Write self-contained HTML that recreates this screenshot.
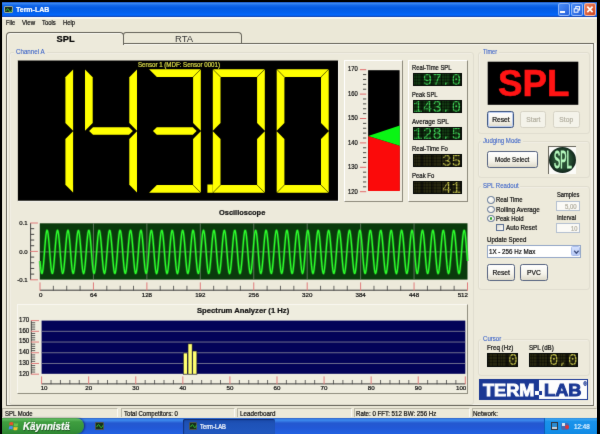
<!DOCTYPE html>
<html lang="fi"><head><meta charset="utf-8"><title>Term-LAB</title>
<style>
html,body{margin:0;padding:0;}
body{width:600px;height:434px;background:#000;overflow:hidden;position:relative;font-family:"Liberation Sans",sans-serif;}
#s{position:absolute;left:0;top:0;width:600px;height:442px;overflow:hidden;will-change:transform;filter:url(#soft);}
#s div{position:absolute;box-sizing:border-box;}
#s svg{position:absolute;overflow:visible;}
.t{position:absolute;white-space:nowrap;transform-origin:0 50%;display:block;}

.t{-webkit-text-stroke:0.22px currentColor;}
.btn{border:0.9px solid #566380;border-radius:2.5px;background:linear-gradient(#ffffff,#f5f3ea 60%,#dedaca);}
.btn.dis{border-color:#d6d3c5;background:#f4f3ea;}
.btn.def{border-color:#3c5480;box-shadow:inset 0 0 0 1px #bccdf0;}
.grp{border:1px solid #e0ddcf;border-radius:3px;box-shadow:inset 0.6px 0.6px 0 rgba(255,255,255,.45);}
.pan{background:#efecdf;border:1px solid;border-color:#ffffff #8d8a7c #8d8a7c #ffffff;}
.seg{background:#ffff00;}
.lcdtxt{position:absolute;color:transparent;font-family:'Liberation Mono',monospace;font-size:100px;letter-spacing:4.5px;overflow:hidden;white-space:nowrap;}

</style></head><body><svg width="0" height="0" style="position:absolute"><filter id="soft" x="0" y="0" width="100%" height="100%" color-interpolation-filters="sRGB"><feConvolveMatrix order="3" kernelMatrix="0.0052 0.0619 0.0052 0.0619 0.7316 0.0619 0.0052 0.0619 0.0052" divisor="1" edgeMode="duplicate" preserveAlpha="true"/></filter></svg><div id="s">
<div style="left:1.80px;top:2.00px;width:595.20px;height:416.00px;background:#ebe8d7;"></div>
<div style="left:1.80px;top:1.60px;width:595.20px;height:15.80px;background:linear-gradient(#1a50c0 0,#3a88f2 9%,#1468ea 22%,#045ae2 40%,#0360ee 70%,#0468fc 88%,#0c4cc8 95%,#163c9c 100%);"></div>
<div style="left:1.80px;top:17.40px;width:595.20px;height:1.30px;background:linear-gradient(#ffffff,#f4f2e6);"></div>
<div style="left:4.00px;top:5.80px;width:8.60px;height:7.40px;background:#1c2a1c;border:0.6px solid #9aa89a;border-radius:1px;"><svg width="8" height="7" viewBox="0 0 8 7" style="left:0;top:0"><path d="M0.8 4.2 C2 1.2 3 1.2 4 3.4 S6 5.6 7 2.6" fill="none" stroke="#35e035" stroke-width="0.9"/></svg></div>
<span class="t" style="left:16.20px;top:5.22px;height:9.36px;line-height:9.36px;font-size:7.80px;color:#fff;font-family:'Liberation Sans',sans-serif;font-weight:bold;transform:scaleX(0.8970);">Term-LAB</span>
<div style="left:557.80px;top:2.90px;width:11.80px;height:12.70px;border-radius:2.2px;border:0.8px solid rgba(190,215,255,.7);background:linear-gradient(135deg,#4a8cf6,#2460dc);"></div>
<div style="left:571.00px;top:2.90px;width:11.80px;height:12.70px;border-radius:2.2px;border:0.8px solid rgba(190,215,255,.7);background:linear-gradient(135deg,#4a8cf6,#2460dc);"></div>
<div style="left:584.10px;top:2.90px;width:11.80px;height:12.70px;border-radius:2.2px;border:0.8px solid rgba(255,215,200,.75);background:linear-gradient(135deg,#ee8460,#cc4420);"></div>
<div style="left:560.30px;top:11.40px;width:4.40px;height:1.60px;background:#fff;"></div>
<svg width="12" height="13" viewBox="0 0 12 13" style="left:571px;top:2.9px"><rect x="4.8" y="3.6" width="3.8" height="3.4" fill="none" stroke="#fff" stroke-width="1"/><rect x="3.2" y="5.8" width="3.8" height="3.4" fill="#2c6ae2" stroke="#fff" stroke-width="1"/></svg>
<svg width="12" height="13" viewBox="0 0 12 13" style="left:584.1px;top:2.9px"><path d="M3.3 3.6 L8.6 9.2 M8.6 3.6 L3.3 9.2" stroke="#fff" stroke-width="1.7" fill="none"/></svg>
<span class="t" style="left:6.00px;top:18.62px;height:8.16px;line-height:8.16px;font-size:6.80px;color:#111;font-family:'Liberation Sans',sans-serif;transform:scaleX(0.8214);">File</span>
<span class="t" style="left:22.00px;top:18.62px;height:8.16px;line-height:8.16px;font-size:6.80px;color:#111;font-family:'Liberation Sans',sans-serif;transform:scaleX(0.8895);">View</span>
<span class="t" style="left:42.00px;top:18.62px;height:8.16px;line-height:8.16px;font-size:6.80px;color:#111;font-family:'Liberation Sans',sans-serif;transform:scaleX(0.8631);">Tools</span>
<span class="t" style="left:63.00px;top:18.62px;height:8.16px;line-height:8.16px;font-size:6.80px;color:#111;font-family:'Liberation Sans',sans-serif;transform:scaleX(0.8581);">Help</span>
<div style="left:123.20px;top:31.90px;width:118.80px;height:12.00px;background:#ebe8d7;border:1px solid #66645a;border-bottom:none;border-radius:3px 4px 0 0;"></div>
<div style="left:6.20px;top:42.70px;width:587.90px;height:363.10px;background:#edeadb;border:1px solid #66645a;border-right:1.9px solid #7d7b6c;box-shadow:inset 1px 1px 0 #fbfaf3,inset -1.5px -1px 0 #f7f6ee;"></div>
<div style="left:594.20px;top:43.00px;width:1.60px;height:363.00px;background:#f8f7f0;"></div>
<div style="left:6.20px;top:31.90px;width:118.00px;height:13.20px;background:#edeadb;border:1px solid #66645a;border-bottom:none;border-radius:4px 4px 0 0;box-shadow:inset 1px 1px 0 #fbfaf3;"></div>
<span class="t" style="left:56.56px;top:33.72px;height:11.16px;line-height:11.16px;font-size:9.30px;color:#000;font-family:'Liberation Sans',sans-serif;font-weight:bold;">SPL</span>
<span class="t" style="left:175.00px;top:33.50px;height:10.80px;line-height:10.80px;font-size:9.00px;color:#333;font-family:'Liberation Sans',sans-serif;transform:scaleX(1.0484);-webkit-text-stroke:0;">RTA</span>
<div class="grp" style="left:9.30px;top:51.50px;width:464.80px;height:353.20px;"></div>
<div style="left:13.50px;top:48.00px;width:33.50px;height:7.00px;background:#edeadb;"></div>
<span class="t" style="left:15.70px;top:48.32px;height:8.16px;line-height:8.16px;font-size:6.80px;color:#3a62c8;font-family:'Liberation Sans',sans-serif;transform:scaleX(0.9114);-webkit-text-stroke:0.1px;">Channel A</span>
<div style="left:17.00px;top:60.00px;width:322.00px;height:142.00px;border:1px solid;border-color:#cfccbe #f8f7f0 #f8f7f0 #cfccbe;"></div>
<svg width="600" height="442" style="left:0;top:0"><rect x="18.00" y="60.60" width="320.00" height="140.10" fill="#000"/></svg>
<span class="t" style="left:138.00px;top:61.44px;height:7.92px;line-height:7.92px;font-size:6.60px;color:#dcdc4a;font-family:'Liberation Sans',sans-serif;transform:scaleX(0.9315);">Sensor 1 (MDF: Sensor 0001)</span>
<div class="lcd" role="img" aria-label="143.00" style="left:0;top:0;width:600px;height:434px;pointer-events:none"><span class="lcdtxt" style="left:20.5px;top:69.3px;width:310px;height:123.4px;line-height:123.4px">14300</span><div class="dg d1" style="left:0;top:0;width:600px;height:434px"><div class="seg" style="left:64px;top:68px;width:11px;height:64px;clip-path:polygon(9.10px 1.60px,9.10px 62.70px,1.40px 55.00px,1.40px 9.30px)"></div><div class="seg" style="left:64px;top:130px;width:11px;height:64px;clip-path:polygon(9.10px 1.30px,9.10px 62.40px,1.40px 54.70px,1.40px 9.00px)"></div></div><div class="dg d4" style="left:0;top:0;width:600px;height:434px"><div class="seg" style="left:84px;top:68px;width:10px;height:64px;clip-path:polygon(1.00px 1.60px,1.00px 62.70px,8.70px 55.00px,8.70px 9.30px)"></div><div class="seg" style="left:88px;top:126px;width:46px;height:10px;clip-path:polygon(1.15px 5.00px,5.00px 1.15px,41.00px 1.15px,44.85px 5.00px,41.00px 8.85px,5.00px 8.85px)"></div><div class="seg" style="left:128px;top:68px;width:10px;height:64px;clip-path:polygon(9.00px 1.60px,9.00px 62.70px,1.30px 55.00px,1.30px 9.30px)"></div><div class="seg" style="left:128px;top:130px;width:10px;height:64px;clip-path:polygon(9.00px 1.30px,9.00px 62.40px,1.30px 54.70px,1.30px 9.00px)"></div></div><div class="dg d3" style="left:0;top:0;width:600px;height:434px"><div class="seg" style="left:148px;top:68px;width:54px;height:10px;clip-path:polygon(1.10px 1.30px,52.50px 1.30px,44.80px 9.00px,8.80px 9.00px)"></div><div class="seg" style="left:192px;top:68px;width:10px;height:64px;clip-path:polygon(8.80px 1.60px,8.80px 62.70px,1.10px 55.00px,1.10px 9.30px)"></div><div class="seg" style="left:151px;top:126px;width:47px;height:10px;clip-path:polygon(1.95px 5.00px,5.80px 1.15px,41.80px 1.15px,45.65px 5.00px,41.80px 8.85px,5.80px 8.85px)"></div><div class="seg" style="left:192px;top:130px;width:10px;height:64px;clip-path:polygon(8.80px 1.30px,8.80px 62.40px,1.10px 54.70px,1.10px 9.00px)"></div><div class="seg" style="left:148px;top:184px;width:54px;height:10px;clip-path:polygon(1.10px 8.70px,52.50px 8.70px,44.80px 1.00px,8.80px 1.00px)"></div></div><div class="dg d0" style="left:0;top:0;width:600px;height:434px"><div class="seg" style="left:212px;top:68px;width:54px;height:10px;clip-path:polygon(1.10px 1.30px,52.50px 1.30px,44.80px 9.00px,8.80px 9.00px)"></div><div class="seg" style="left:256px;top:68px;width:10px;height:64px;clip-path:polygon(8.80px 1.60px,8.80px 62.70px,1.10px 55.00px,1.10px 9.30px)"></div><div class="seg" style="left:256px;top:130px;width:10px;height:64px;clip-path:polygon(8.80px 1.30px,8.80px 62.40px,1.10px 54.70px,1.10px 9.00px)"></div><div class="seg" style="left:212px;top:184px;width:54px;height:10px;clip-path:polygon(1.10px 8.70px,52.50px 8.70px,44.80px 1.00px,8.80px 1.00px)"></div><div class="seg" style="left:211px;top:130px;width:11px;height:64px;clip-path:polygon(1.80px 1.30px,1.80px 62.40px,9.50px 54.70px,9.50px 9.00px)"></div><div class="seg" style="left:211px;top:68px;width:11px;height:64px;clip-path:polygon(1.80px 1.60px,1.80px 62.70px,9.50px 55.00px,9.50px 9.30px)"></div></div><div class="dg d0" style="left:0;top:0;width:600px;height:434px"><div class="seg" style="left:276px;top:68px;width:54px;height:10px;clip-path:polygon(1.00px 1.30px,52.40px 1.30px,44.70px 9.00px,8.70px 9.00px)"></div><div class="seg" style="left:320px;top:68px;width:10px;height:64px;clip-path:polygon(8.70px 1.60px,8.70px 62.70px,1.00px 55.00px,1.00px 9.30px)"></div><div class="seg" style="left:320px;top:130px;width:10px;height:64px;clip-path:polygon(8.70px 1.30px,8.70px 62.40px,1.00px 54.70px,1.00px 9.00px)"></div><div class="seg" style="left:276px;top:184px;width:54px;height:10px;clip-path:polygon(1.00px 8.70px,52.40px 8.70px,44.70px 1.00px,8.70px 1.00px)"></div><div class="seg" style="left:275px;top:130px;width:11px;height:64px;clip-path:polygon(1.70px 1.30px,1.70px 62.40px,9.40px 54.70px,9.40px 9.00px)"></div><div class="seg" style="left:275px;top:68px;width:11px;height:64px;clip-path:polygon(1.70px 1.60px,1.70px 62.70px,9.40px 55.00px,9.40px 9.30px)"></div></div><div class="dg dp" style="left:0;top:0;width:600px;height:434px"><div class="seg" style="left:206px;top:183px;width:8px;height:11px;clip-path:polygon(1.40px 1.60px,6.80px 1.60px,6.80px 9.70px,1.40px 9.70px)"></div></div></div>
<div class="pan" style="left:344.30px;top:59.80px;width:58.80px;height:142.40px;"></div>
<svg width="600" height="442" style="left:0;top:0"><rect x="368.10" y="70.20" width="31.50" height="120.30" fill="#000"/></svg>
<svg width="32" height="121" viewBox="0 0 31.4 120.3" style="left:368.2px;top:70.2px"><polygon points="0,65.5 31.4,75.4 31.4,120.3 0,120.3" fill="#fb0a0a"/><polygon points="0,65.5 31.4,55.2 31.4,75.4" fill="#0af514"/></svg>
<svg width="600" height="434" style="left:0;top:0"><line x1="359.9" x2="366.2" y1="69.70" y2="69.70" stroke="#e06a6a" stroke-width="1"/><line x1="363" x2="366.2" y1="74.58" y2="74.58" stroke="#3a3a34" stroke-width="0.9"/><line x1="363" x2="366.2" y1="79.46" y2="79.46" stroke="#3a3a34" stroke-width="0.9"/><line x1="363" x2="366.2" y1="84.34" y2="84.34" stroke="#3a3a34" stroke-width="0.9"/><line x1="363" x2="366.2" y1="89.22" y2="89.22" stroke="#3a3a34" stroke-width="0.9"/><line x1="359.9" x2="366.2" y1="94.10" y2="94.10" stroke="#e06a6a" stroke-width="1"/><line x1="363" x2="366.2" y1="98.98" y2="98.98" stroke="#3a3a34" stroke-width="0.9"/><line x1="363" x2="366.2" y1="103.86" y2="103.86" stroke="#3a3a34" stroke-width="0.9"/><line x1="363" x2="366.2" y1="108.74" y2="108.74" stroke="#3a3a34" stroke-width="0.9"/><line x1="363" x2="366.2" y1="113.62" y2="113.62" stroke="#3a3a34" stroke-width="0.9"/><line x1="359.9" x2="366.2" y1="118.50" y2="118.50" stroke="#e06a6a" stroke-width="1"/><line x1="363" x2="366.2" y1="123.38" y2="123.38" stroke="#3a3a34" stroke-width="0.9"/><line x1="363" x2="366.2" y1="128.26" y2="128.26" stroke="#3a3a34" stroke-width="0.9"/><line x1="363" x2="366.2" y1="133.14" y2="133.14" stroke="#3a3a34" stroke-width="0.9"/><line x1="363" x2="366.2" y1="138.02" y2="138.02" stroke="#3a3a34" stroke-width="0.9"/><line x1="359.9" x2="366.2" y1="142.90" y2="142.90" stroke="#e06a6a" stroke-width="1"/><line x1="363" x2="366.2" y1="147.78" y2="147.78" stroke="#3a3a34" stroke-width="0.9"/><line x1="363" x2="366.2" y1="152.66" y2="152.66" stroke="#3a3a34" stroke-width="0.9"/><line x1="363" x2="366.2" y1="157.54" y2="157.54" stroke="#3a3a34" stroke-width="0.9"/><line x1="363" x2="366.2" y1="162.42" y2="162.42" stroke="#3a3a34" stroke-width="0.9"/><line x1="359.9" x2="366.2" y1="167.30" y2="167.30" stroke="#e06a6a" stroke-width="1"/><line x1="363" x2="366.2" y1="172.18" y2="172.18" stroke="#3a3a34" stroke-width="0.9"/><line x1="363" x2="366.2" y1="177.06" y2="177.06" stroke="#3a3a34" stroke-width="0.9"/><line x1="363" x2="366.2" y1="181.94" y2="181.94" stroke="#3a3a34" stroke-width="0.9"/><line x1="363" x2="366.2" y1="186.82" y2="186.82" stroke="#3a3a34" stroke-width="0.9"/><line x1="359.9" x2="366.2" y1="191.70" y2="191.70" stroke="#e06a6a" stroke-width="1"/></svg>
<span class="t" style="left:348.30px;top:64.98px;height:8.04px;line-height:8.04px;font-size:6.70px;color:#111;font-family:'Liberation Sans',sans-serif;transform:scaleX(0.8768);">170</span>
<span class="t" style="left:348.30px;top:89.53px;height:8.04px;line-height:8.04px;font-size:6.70px;color:#111;font-family:'Liberation Sans',sans-serif;transform:scaleX(0.8768);">160</span>
<span class="t" style="left:348.30px;top:114.08px;height:8.04px;line-height:8.04px;font-size:6.70px;color:#111;font-family:'Liberation Sans',sans-serif;transform:scaleX(0.8768);">150</span>
<span class="t" style="left:348.30px;top:138.63px;height:8.04px;line-height:8.04px;font-size:6.70px;color:#111;font-family:'Liberation Sans',sans-serif;transform:scaleX(0.8768);">140</span>
<span class="t" style="left:348.30px;top:163.18px;height:8.04px;line-height:8.04px;font-size:6.70px;color:#111;font-family:'Liberation Sans',sans-serif;transform:scaleX(0.8768);">130</span>
<span class="t" style="left:348.30px;top:187.73px;height:8.04px;line-height:8.04px;font-size:6.70px;color:#111;font-family:'Liberation Sans',sans-serif;transform:scaleX(0.8768);">120</span>
<div class="pan" style="left:407.50px;top:59.80px;width:60.70px;height:142.40px;"></div>
<span class="t" style="left:412.00px;top:63.68px;height:8.04px;line-height:8.04px;font-size:6.70px;color:#111;font-family:'Liberation Sans',sans-serif;transform:scaleX(0.8766);">Real-Time SPL</span>
<div style="left:412.50px;top:72.60px;width:49.20px;height:13.30px;background:repeating-linear-gradient(to left,#081c08 0,#081c08 0.9px,#113811 1.1px,#113811 9.0px,#081c08 9.3px,#081c08 9.65px);border:0.8px solid #050805;overflow:hidden;"><span class="t" style="left:9.19px;top:-2.05px;height:19.20px;line-height:19.20px;font-size:16.00px;color:#3cc452;font-family:'Liberation Mono',monospace;-webkit-text-stroke:0;">97,0</span><div style="left:0;top:0;width:100%;height:100%;background:repeating-linear-gradient(0deg,rgba(0,0,0,.32) 0,rgba(0,0,0,.32) 0.45px,transparent 0.55px,transparent 1.55px),repeating-linear-gradient(270deg,rgba(0,0,0,.32) 0,rgba(0,0,0,.32) 0.45px,transparent 0.55px,transparent 1.61px);"></div></div>
<span class="t" style="left:412.00px;top:90.68px;height:8.04px;line-height:8.04px;font-size:6.70px;color:#111;font-family:'Liberation Sans',sans-serif;transform:scaleX(0.8525);">Peak SPL</span>
<div style="left:412.50px;top:99.67px;width:49.20px;height:13.30px;background:repeating-linear-gradient(to left,#081c08 0,#081c08 0.9px,#113811 1.1px,#113811 9.0px,#081c08 9.3px,#081c08 9.65px);border:0.8px solid #050805;overflow:hidden;"><span class="t" style="left:-0.41px;top:-2.05px;height:19.20px;line-height:19.20px;font-size:16.00px;color:#3cc452;font-family:'Liberation Mono',monospace;-webkit-text-stroke:0;">143,0</span><div style="left:0;top:0;width:100%;height:100%;background:repeating-linear-gradient(0deg,rgba(0,0,0,.32) 0,rgba(0,0,0,.32) 0.45px,transparent 0.55px,transparent 1.55px),repeating-linear-gradient(270deg,rgba(0,0,0,.32) 0,rgba(0,0,0,.32) 0.45px,transparent 0.55px,transparent 1.61px);"></div></div>
<span class="t" style="left:412.00px;top:117.68px;height:8.04px;line-height:8.04px;font-size:6.70px;color:#111;font-family:'Liberation Sans',sans-serif;transform:scaleX(0.9376);">Average SPL</span>
<div style="left:412.50px;top:126.74px;width:49.20px;height:13.30px;background:repeating-linear-gradient(to left,#081c08 0,#081c08 0.9px,#113811 1.1px,#113811 9.0px,#081c08 9.3px,#081c08 9.65px);border:0.8px solid #050805;overflow:hidden;"><span class="t" style="left:-0.41px;top:-2.05px;height:19.20px;line-height:19.20px;font-size:16.00px;color:#3cc452;font-family:'Liberation Mono',monospace;-webkit-text-stroke:0;">128,5</span><div style="left:0;top:0;width:100%;height:100%;background:repeating-linear-gradient(0deg,rgba(0,0,0,.32) 0,rgba(0,0,0,.32) 0.45px,transparent 0.55px,transparent 1.55px),repeating-linear-gradient(270deg,rgba(0,0,0,.32) 0,rgba(0,0,0,.32) 0.45px,transparent 0.55px,transparent 1.61px);"></div></div>
<span class="t" style="left:412.00px;top:144.68px;height:8.04px;line-height:8.04px;font-size:6.70px;color:#111;font-family:'Liberation Sans',sans-serif;transform:scaleX(0.8927);">Real-Time Fo</span>
<div style="left:412.50px;top:153.81px;width:49.20px;height:13.30px;background:repeating-linear-gradient(to left,#12120a 0,#12120a 0.9px,#26260f 1.1px,#26260f 9.0px,#12120a 9.3px,#12120a 9.65px);border:0.8px solid #050805;overflow:hidden;"><span class="t" style="left:28.40px;top:-2.05px;height:19.20px;line-height:19.20px;font-size:16.00px;color:#b9b848;font-family:'Liberation Mono',monospace;-webkit-text-stroke:0;">35</span><div style="left:0;top:0;width:100%;height:100%;background:repeating-linear-gradient(0deg,rgba(0,0,0,.32) 0,rgba(0,0,0,.32) 0.45px,transparent 0.55px,transparent 1.55px),repeating-linear-gradient(270deg,rgba(0,0,0,.32) 0,rgba(0,0,0,.32) 0.45px,transparent 0.55px,transparent 1.61px);"></div></div>
<span class="t" style="left:412.00px;top:171.68px;height:8.04px;line-height:8.04px;font-size:6.70px;color:#111;font-family:'Liberation Sans',sans-serif;transform:scaleX(0.8938);">Peak Fo</span>
<div style="left:412.50px;top:180.88px;width:49.20px;height:13.30px;background:repeating-linear-gradient(to left,#12120a 0,#12120a 0.9px,#26260f 1.1px,#26260f 9.0px,#12120a 9.3px,#12120a 9.65px);border:0.8px solid #050805;overflow:hidden;"><span class="t" style="left:28.40px;top:-2.05px;height:19.20px;line-height:19.20px;font-size:16.00px;color:#b9b848;font-family:'Liberation Mono',monospace;-webkit-text-stroke:0;">41</span><div style="left:0;top:0;width:100%;height:100%;background:repeating-linear-gradient(0deg,rgba(0,0,0,.32) 0,rgba(0,0,0,.32) 0.45px,transparent 0.55px,transparent 1.55px),repeating-linear-gradient(270deg,rgba(0,0,0,.32) 0,rgba(0,0,0,.32) 0.45px,transparent 0.55px,transparent 1.61px);"></div></div>
<div class="grp" style="left:478.00px;top:51.50px;width:112.30px;height:82.00px;"></div>
<div style="left:481.00px;top:48.50px;width:18.00px;height:7.00px;background:#edeadb;"></div>
<span class="t" style="left:483.00px;top:48.22px;height:8.16px;line-height:8.16px;font-size:6.80px;color:#3a62c8;font-family:'Liberation Sans',sans-serif;transform:scaleX(0.8177);-webkit-text-stroke:0.1px;">Timer</span>
<svg width="600" height="442" style="left:0;top:0"><rect x="487.70" y="61.70" width="90.60" height="43.10" fill="#000"/></svg>
<span class="t" style="left:497.90px;top:60.98px;height:44.64px;line-height:44.64px;font-size:37.20px;color:#ff1414;font-family:'Liberation Sans',sans-serif;font-weight:bold;transform:scaleX(0.9855);-webkit-text-stroke:0.7px #ff1414;">SPL</span>
<div class="btn def" style="left:487.30px;top:111.00px;width:27.20px;height:17.00px;"></div>
<span class="t" style="left:492.15px;top:115.98px;height:8.04px;line-height:8.04px;font-size:6.70px;color:#111;font-family:'Liberation Sans',sans-serif;">Reset</span>
<div class="btn dis" style="left:520.30px;top:111.00px;width:26.20px;height:17.00px;"></div>
<span class="t" style="left:526.33px;top:115.98px;height:8.04px;line-height:8.04px;font-size:6.70px;color:#b4b1a2;font-family:'Liberation Sans',sans-serif;">Start</span>
<div class="btn dis" style="left:553.00px;top:111.00px;width:26.50px;height:17.00px;"></div>
<span class="t" style="left:559.36px;top:115.98px;height:8.04px;line-height:8.04px;font-size:6.70px;color:#b4b1a2;font-family:'Liberation Sans',sans-serif;">Stop</span>
<div class="grp" style="left:478.00px;top:141.00px;width:112.30px;height:36.50px;"></div>
<div style="left:480.70px;top:138.00px;width:42.00px;height:7.00px;background:#edeadb;"></div>
<span class="t" style="left:482.70px;top:137.22px;height:8.16px;line-height:8.16px;font-size:6.80px;color:#3a62c8;font-family:'Liberation Sans',sans-serif;transform:scaleX(0.8896);-webkit-text-stroke:0.1px;">Judging Mode</span>
<div class="btn" style="left:487.30px;top:151.40px;width:51.20px;height:17.00px;"></div>
<span class="t" style="left:495.20px;top:156.38px;height:8.04px;line-height:8.04px;font-size:6.70px;color:#111;font-family:'Liberation Sans',sans-serif;transform:scaleX(0.9210);">Mode Select</span>
<div style="left:547.60px;top:146.00px;width:28.80px;height:28.20px;background:#fbfbf8;border-top:1px solid #6a685e;border-left:1px solid #6a685e;"></div>
<div style="left:548.80px;top:147.40px;width:27.20px;height:26.00px;background:radial-gradient(ellipse at 50% 48%,#2f5638 0,#244a30 45%,#10241a 70%,#1c1c24 88%,#4a4650 100%);border-radius:50%;"></div>
<span class="t" style="left:554.00px;top:146.78px;height:27.84px;line-height:27.84px;font-size:23.20px;color:#b8fcc0;font-family:'Liberation Sans',sans-serif;transform:scaleX(0.4059);-webkit-text-stroke:0.9px #b8fcc0;">SPL</span>
<div class="grp" style="left:478.00px;top:186.00px;width:112.30px;height:103.50px;"></div>
<div style="left:480.70px;top:183.00px;width:39.70px;height:7.00px;background:#edeadb;"></div>
<span class="t" style="left:482.70px;top:182.12px;height:8.16px;line-height:8.16px;font-size:6.80px;color:#3a62c8;font-family:'Liberation Sans',sans-serif;transform:scaleX(0.8881);-webkit-text-stroke:0.1px;">SPL Readout</span>
<div style="left:487.20px;top:196.30px;width:7.40px;height:7.40px;border-radius:50%;border:0.7px solid #5a7094;background:radial-gradient(circle at 35% 35%,#fff,#e4e2d6);"></div>
<span class="t" style="left:496.00px;top:196.38px;height:8.04px;line-height:8.04px;font-size:6.70px;color:#111;font-family:'Liberation Sans',sans-serif;transform:scaleX(0.8820);">Real Time</span>
<div style="left:487.20px;top:205.50px;width:7.40px;height:7.40px;border-radius:50%;border:0.7px solid #5a7094;background:radial-gradient(circle at 35% 35%,#fff,#e4e2d6);"></div>
<span class="t" style="left:496.00px;top:205.58px;height:8.04px;line-height:8.04px;font-size:6.70px;color:#111;font-family:'Liberation Sans',sans-serif;transform:scaleX(0.9358);">Rolling Average</span>
<div style="left:487.20px;top:214.70px;width:7.40px;height:7.40px;border-radius:50%;border:0.7px solid #5a7094;background:radial-gradient(circle at 35% 35%,#fff,#e4e2d6);"></div>
<div style="left:489.50px;top:217.00px;width:2.80px;height:2.80px;border-radius:50%;background:#2aa42a;"></div>
<span class="t" style="left:496.00px;top:214.78px;height:8.04px;line-height:8.04px;font-size:6.70px;color:#111;font-family:'Liberation Sans',sans-serif;transform:scaleX(0.8896);">Peak Hold</span>
<span class="t" style="left:557.00px;top:191.18px;height:8.04px;line-height:8.04px;font-size:6.70px;color:#111;font-family:'Liberation Sans',sans-serif;transform:scaleX(0.8632);">Samples</span>
<div style="left:556.30px;top:200.50px;width:23.70px;height:10.90px;background:#fbfaf6;border:0.8px solid #b4c0d0;"></div>
<span class="t" style="left:564.50px;top:202.80px;height:7.80px;line-height:7.80px;font-size:6.50px;color:#b0ad9e;font-family:'Liberation Sans',sans-serif;transform:scaleX(0.9249);">5,00</span>
<span class="t" style="left:557.00px;top:214.38px;height:8.04px;line-height:8.04px;font-size:6.70px;color:#111;font-family:'Liberation Sans',sans-serif;transform:scaleX(0.8648);">Interval</span>
<div style="left:556.30px;top:222.80px;width:23.70px;height:10.40px;background:#fbfaf6;border:0.8px solid #b4c0d0;"></div>
<span class="t" style="left:571.00px;top:224.70px;height:7.80px;line-height:7.80px;font-size:6.50px;color:#b0ad9e;font-family:'Liberation Sans',sans-serif;transform:scaleX(0.8853);">10</span>
<div style="left:496.40px;top:223.80px;width:7.60px;height:7.20px;background:linear-gradient(135deg,#dcdacd,#fff);border:0.8px solid #5a6f94;"></div>
<span class="t" style="left:506.00px;top:223.88px;height:8.04px;line-height:8.04px;font-size:6.70px;color:#111;font-family:'Liberation Sans',sans-serif;transform:scaleX(0.9353);">Auto Reset</span>
<span class="t" style="left:486.60px;top:236.38px;height:8.04px;line-height:8.04px;font-size:6.70px;color:#111;font-family:'Liberation Sans',sans-serif;transform:scaleX(0.9198);">Update Speed</span>
<div style="left:486.60px;top:244.90px;width:94.40px;height:12.80px;background:#fff;border:0.8px solid #93a6c6;"></div>
<span class="t" style="left:489.40px;top:248.04px;height:7.92px;line-height:7.92px;font-size:6.60px;color:#111;font-family:'Liberation Sans',sans-serif;transform:scaleX(0.9420);">1X - 256 Hz Max</span>
<div style="left:571.00px;top:246.40px;width:9.00px;height:9.90px;background:linear-gradient(#d4e0fc,#b8caf6);border-radius:1.5px;border:0.5px solid #a8bcec;"><svg width="9" height="10" viewBox="0 0 9 10" style="left:0;top:0"><path d="M2.2 3.8 L4.4 6.2 L6.6 3.8" fill="none" stroke="#3c4c7c" stroke-width="1.3"/></svg></div>
<div class="btn" style="left:487.30px;top:263.50px;width:27.70px;height:17.30px;"></div>
<span class="t" style="left:492.40px;top:268.63px;height:8.04px;line-height:8.04px;font-size:6.70px;color:#111;font-family:'Liberation Sans',sans-serif;">Reset</span>
<div class="btn" style="left:520.30px;top:263.50px;width:27.40px;height:17.30px;"></div>
<span class="t" style="left:527.11px;top:268.63px;height:8.04px;line-height:8.04px;font-size:6.70px;color:#111;font-family:'Liberation Sans',sans-serif;">PVC</span>
<div class="grp" style="left:478.00px;top:339.00px;width:112.30px;height:36.70px;"></div>
<div style="left:480.70px;top:336.00px;width:22.30px;height:7.00px;background:#edeadb;"></div>
<span class="t" style="left:482.70px;top:334.82px;height:8.16px;line-height:8.16px;font-size:6.80px;color:#3a62c8;font-family:'Liberation Sans',sans-serif;transform:scaleX(0.8970);-webkit-text-stroke:0.1px;">Cursor</span>
<span class="t" style="left:487.30px;top:343.68px;height:8.04px;line-height:8.04px;font-size:6.70px;color:#111;font-family:'Liberation Sans',sans-serif;transform:scaleX(0.9368);">Freq (Hz)</span>
<span class="t" style="left:529.20px;top:343.68px;height:8.04px;line-height:8.04px;font-size:6.70px;color:#111;font-family:'Liberation Sans',sans-serif;transform:scaleX(0.9208);">SPL (dB)</span>
<div style="left:487.30px;top:353.00px;width:31.10px;height:13.50px;background:repeating-linear-gradient(to left,#12120a 0,#12120a 0.9px,#26260f 1.1px,#26260f 9.0px,#12120a 9.3px,#12120a 9.65px);border:0.8px solid #050805;overflow:hidden;"><span class="t" style="left:19.90px;top:-1.95px;height:19.20px;line-height:19.20px;font-size:16.00px;color:#b9b848;font-family:'Liberation Mono',monospace;-webkit-text-stroke:0;">0</span><div style="left:0;top:0;width:100%;height:100%;background:repeating-linear-gradient(0deg,rgba(0,0,0,.32) 0,rgba(0,0,0,.32) 0.45px,transparent 0.55px,transparent 1.55px),repeating-linear-gradient(270deg,rgba(0,0,0,.32) 0,rgba(0,0,0,.32) 0.45px,transparent 0.55px,transparent 1.61px);"></div></div>
<div style="left:529.20px;top:353.00px;width:49.10px;height:13.50px;background:repeating-linear-gradient(to left,#12120a 0,#12120a 0.9px,#26260f 1.1px,#26260f 9.0px,#12120a 9.3px,#12120a 9.65px);border:0.8px solid #050805;overflow:hidden;"><span class="t" style="left:18.69px;top:-1.95px;height:19.20px;line-height:19.20px;font-size:16.00px;color:#b9b848;font-family:'Liberation Mono',monospace;-webkit-text-stroke:0;">0,0</span><div style="left:0;top:0;width:100%;height:100%;background:repeating-linear-gradient(0deg,rgba(0,0,0,.32) 0,rgba(0,0,0,.32) 0.45px,transparent 0.55px,transparent 1.55px),repeating-linear-gradient(270deg,rgba(0,0,0,.32) 0,rgba(0,0,0,.32) 0.45px,transparent 0.55px,transparent 1.61px);"></div></div>
<div style="left:478.60px;top:379.40px;width:109.50px;height:20.80px;background:#fdfdfd;border:1.5px solid #1b3894;"></div>
<div style="left:478.60px;top:379.40px;width:60.40px;height:20.80px;background:#1b3894;"></div>
<span class="t" style="left:482.60px;top:380.52px;height:20.16px;line-height:20.16px;font-size:16.80px;color:#fff;font-family:'Liberation Sans',sans-serif;font-weight:bold;transform:scaleX(1.0800);-webkit-text-stroke:0.9px #fff;">TERM</span>
<div style="left:535.00px;top:391.00px;width:4.00px;height:4.00px;background:#fff;"></div>
<div style="left:539.00px;top:391.00px;width:3.40px;height:4.00px;background:#1b3894;"></div>
<span class="t" style="left:544.40px;top:380.52px;height:20.16px;line-height:20.16px;font-size:16.80px;color:#1b3894;font-family:'Liberation Sans',sans-serif;font-weight:bold;transform:scaleX(1.0890);-webkit-text-stroke:0.9px #1b3894;">LAB</span>
<span class="t" style="left:583.60px;top:382.24px;height:5.52px;line-height:5.52px;font-size:4.60px;color:#1b3894;font-family:'Liberation Sans',sans-serif;font-weight:bold;">®</span>
<span class="t" style="left:219.00px;top:208.14px;height:9.12px;line-height:9.12px;font-size:7.60px;color:#111;font-family:'Liberation Sans',sans-serif;font-weight:bold;transform:scaleX(0.9788);">Oscilloscope</span>
<svg width="600" height="442" style="left:0;top:0"><rect x="39.80" y="223.30" width="427.70" height="56.30" fill="#0a3a0c"/></svg>
<svg width="600" height="434" style="left:0;top:0"><line x1="93.44" x2="93.44" y1="223.00" y2="279.80" stroke="#6f7f6a" stroke-width="0.8"/><line x1="146.88" x2="146.88" y1="223.00" y2="279.80" stroke="#6f7f6a" stroke-width="0.8"/><line x1="200.31" x2="200.31" y1="223.00" y2="279.80" stroke="#6f7f6a" stroke-width="0.8"/><line x1="253.75" x2="253.75" y1="223.00" y2="279.80" stroke="#6f7f6a" stroke-width="0.8"/><line x1="307.19" x2="307.19" y1="223.00" y2="279.80" stroke="#6f7f6a" stroke-width="0.8"/><line x1="360.62" x2="360.62" y1="223.00" y2="279.80" stroke="#6f7f6a" stroke-width="0.8"/><line x1="414.06" x2="414.06" y1="223.00" y2="279.80" stroke="#6f7f6a" stroke-width="0.8"/><line x1="40.00" x2="467.50" y1="251.90" y2="251.90" stroke="#6f8f6a" stroke-width="0.8"/><path d="M40.0,261.0 L40.5,266.4 L41.0,270.5 L41.5,272.9 L42.0,273.4 L42.5,272.0 L43.0,268.8 L43.5,264.1 L44.0,258.2 L44.5,251.8 L45.0,245.4 L45.5,239.6 L46.0,234.9 L46.5,231.7 L47.0,230.3 L47.5,230.9 L48.0,233.4 L48.5,237.5 L49.0,243.0 L49.5,249.2 L50.0,255.7 L50.5,261.8 L51.0,267.1 L51.5,271.0 L52.0,273.1 L52.5,273.4 L53.0,271.7 L53.5,268.2 L54.0,263.3 L54.5,257.3 L55.0,250.9 L55.5,244.5 L56.0,238.8 L56.5,234.3 L57.0,231.4 L57.5,230.3 L58.0,231.2 L58.5,233.9 L59.0,238.3 L59.5,243.9 L60.0,250.2 L60.5,256.6 L61.0,262.7 L61.5,267.7 L62.0,271.4 L62.5,273.3 L63.0,273.2 L63.5,271.3 L64.0,267.6 L64.5,262.5 L65.0,256.4 L65.5,249.9 L66.0,243.6 L66.5,238.1 L67.0,233.8 L67.5,231.1 L68.0,230.3 L68.5,231.5 L69.0,234.5 L69.5,239.0 L70.0,244.7 L70.5,251.1 L71.0,257.6 L71.5,263.5 L72.0,268.4 L72.5,271.8 L73.0,273.4 L73.5,273.1 L74.0,270.8 L74.5,266.9 L75.0,261.6 L75.5,255.4 L76.0,249.0 L76.5,242.7 L77.0,237.4 L77.5,233.3 L78.0,230.9 L78.5,230.4 L79.0,231.8 L79.5,235.0 L80.0,239.8 L80.5,245.6 L81.0,252.1 L81.5,258.5 L82.0,264.3 L82.5,269.0 L83.0,272.1 L83.5,273.5 L84.0,272.9 L84.5,270.4 L85.0,266.2 L85.5,260.8 L86.0,254.5 L86.5,248.0 L87.0,241.9 L87.5,236.7 L88.0,232.8 L88.5,230.7 L89.0,230.4 L89.5,232.2 L90.0,235.6 L90.5,240.6 L91.0,246.6 L91.5,253.0 L92.0,259.4 L92.5,265.0 L93.0,269.5 L93.5,272.4 L94.0,273.5 L94.5,272.6 L95.0,269.8 L95.5,265.5 L96.0,259.9 L96.5,253.6 L97.0,247.1 L97.5,241.1 L98.0,236.0 L98.5,232.4 L99.0,230.5 L99.5,230.6 L100.0,232.6 L100.5,236.3 L101.0,241.4 L101.5,247.5 L102.0,254.0 L102.5,260.3 L103.0,265.8 L103.5,270.1 L104.0,272.7 L104.5,273.5 L105.0,272.3 L105.5,269.3 L106.0,264.7 L106.5,259.0 L107.0,252.6 L107.5,246.2 L108.0,240.2 L108.5,235.4 L109.0,232.0 L109.5,230.4 L110.0,230.7 L110.5,233.0 L111.0,237.0 L111.5,242.3 L112.0,248.4 L112.5,254.9 L113.0,261.1 L113.5,266.5 L114.0,270.6 L114.5,273.0 L115.0,273.4 L115.5,272.0 L116.0,268.7 L116.5,263.9 L117.0,258.1 L117.5,251.7 L118.0,245.3 L118.5,239.5 L119.0,234.8 L119.5,231.6 L120.0,230.3 L120.5,231.0 L121.0,233.5 L121.5,237.7 L122.0,243.1 L122.5,249.4 L123.0,255.9 L123.5,262.0 L124.0,267.2 L124.5,271.0 L125.0,273.1 L125.5,273.3 L126.0,271.6 L126.5,268.1 L127.0,263.1 L127.5,257.2 L128.0,250.7 L128.5,244.4 L129.0,238.7 L129.5,234.2 L130.0,231.3 L130.5,230.3 L131.0,231.2 L131.5,234.0 L132.0,238.4 L132.5,244.0 L133.0,250.3 L133.5,256.8 L134.0,262.8 L134.5,267.9 L135.0,271.5 L135.5,273.3 L136.0,273.2 L136.5,271.2 L137.0,267.5 L137.5,262.3 L138.0,256.2 L138.5,249.8 L139.0,243.5 L139.5,237.9 L140.0,233.7 L140.5,231.1 L141.0,230.3 L141.5,231.5 L142.0,234.5 L142.5,239.1 L143.0,244.9 L143.5,251.3 L144.0,257.7 L144.5,263.6 L145.0,268.5 L145.5,271.8 L146.0,273.4 L146.5,273.0 L147.0,270.8 L147.5,266.8 L148.0,261.5 L148.5,255.3 L149.0,248.8 L149.5,242.6 L150.0,237.2 L150.5,233.2 L151.0,230.8 L151.5,230.4 L152.0,231.8 L152.5,235.1 L153.0,239.9 L153.5,245.8 L154.0,252.2 L154.5,258.6 L155.0,264.4 L155.5,269.1 L156.0,272.2 L156.5,273.5 L157.0,272.8 L157.5,270.3 L158.0,266.1 L158.5,260.6 L159.0,254.3 L159.5,247.9 L160.0,241.8 L160.5,236.6 L161.0,232.7 L161.5,230.6 L162.0,230.5 L162.5,232.2 L163.0,235.7 L163.5,240.7 L164.0,246.7 L164.5,253.2 L165.0,259.5 L165.5,265.2 L166.0,269.6 L166.5,272.5 L167.0,273.5 L167.5,272.6 L168.0,269.8 L168.5,265.3 L169.0,259.7 L169.5,253.4 L170.0,246.9 L170.5,240.9 L171.0,235.9 L171.5,232.3 L172.0,230.5 L172.5,230.6 L173.0,232.6 L173.5,236.4 L174.0,241.6 L174.5,247.7 L175.0,254.1 L175.5,260.4 L176.0,265.9 L176.5,270.2 L177.0,272.8 L177.5,273.5 L178.0,272.3 L178.5,269.2 L179.0,264.6 L179.5,258.8 L180.0,252.4 L180.5,246.0 L181.0,240.1 L181.5,235.3 L182.0,231.9 L182.5,230.4 L183.0,230.8 L183.5,233.1 L184.0,237.1 L184.5,242.4 L185.0,248.6 L185.5,255.1 L186.0,261.3 L186.5,266.6 L187.0,270.6 L187.5,273.0 L188.0,273.4 L188.5,271.9 L189.0,268.6 L189.5,263.8 L190.0,257.9 L190.5,251.5 L191.0,245.1 L191.5,239.3 L192.0,234.7 L192.5,231.6 L193.0,230.3 L193.5,231.0 L194.0,233.6 L194.5,237.8 L195.0,243.3 L195.5,249.5 L196.0,256.0 L196.5,262.1 L197.0,267.3 L197.5,271.1 L198.0,273.2 L198.5,273.3 L199.0,271.5 L199.5,268.0 L200.0,263.0 L200.5,257.0 L201.0,250.5 L201.5,244.2 L202.0,238.6 L202.5,234.1 L203.0,231.3 L203.5,230.3 L204.0,231.3 L204.5,234.1 L205.0,238.5 L205.5,244.1 L206.0,250.5 L206.5,256.9 L207.0,262.9 L207.5,268.0 L208.0,271.5 L208.5,273.3 L209.0,273.2 L209.5,271.1 L210.0,267.3 L210.5,262.2 L211.0,256.1 L211.5,249.6 L212.0,243.3 L212.5,237.8 L213.0,233.6 L213.5,231.0 L214.0,230.3 L214.5,231.6 L215.0,234.6 L215.5,239.3 L216.0,245.0 L216.5,251.4 L217.0,257.9 L217.5,263.8 L218.0,268.6 L218.5,271.9 L219.0,273.4 L219.5,273.0 L220.0,270.7 L220.5,266.7 L221.0,261.3 L221.5,255.1 L222.0,248.7 L222.5,242.5 L223.0,237.1 L223.5,233.1 L224.0,230.8 L224.5,230.4 L225.0,231.9 L225.5,235.2 L226.0,240.1 L226.5,246.0 L227.0,252.4 L227.5,258.8 L228.0,264.5 L228.5,269.2 L229.0,272.2 L229.5,273.5 L230.0,272.8 L230.5,270.2 L231.0,266.0 L231.5,260.5 L232.0,254.2 L232.5,247.7 L233.0,241.6 L233.5,236.4 L234.0,232.7 L234.5,230.6 L235.0,230.5 L235.5,232.3 L236.0,235.9 L236.5,240.9 L237.0,246.9 L237.5,253.3 L238.0,259.7 L238.5,265.3 L239.0,269.7 L239.5,272.5 L240.0,273.5 L240.5,272.5 L241.0,269.7 L241.5,265.2 L242.0,259.6 L242.5,253.2 L243.0,246.8 L243.5,240.8 L244.0,235.8 L244.5,232.2 L245.0,230.5 L245.5,230.6 L246.0,232.7 L246.5,236.5 L247.0,241.7 L247.5,247.8 L248.0,254.3 L248.5,260.5 L249.0,266.0 L249.5,270.2 L250.0,272.8 L250.5,273.5 L251.0,272.2 L251.5,269.1 L252.0,264.5 L252.5,258.7 L253.0,252.3 L253.5,245.9 L254.0,240.0 L254.5,235.2 L255.0,231.9 L255.5,230.4 L256.0,230.8 L256.5,233.2 L257.0,237.2 L257.5,242.5 L258.0,248.7 L258.5,255.2 L259.0,261.4 L259.5,266.7 L260.0,270.7 L260.5,273.0 L261.0,273.4 L261.5,271.9 L262.0,268.5 L262.5,263.7 L263.0,257.8 L263.5,251.3 L264.0,245.0 L264.5,239.2 L265.0,234.6 L265.5,231.5 L266.0,230.3 L266.5,231.0 L267.0,233.6 L267.5,237.9 L268.0,243.4 L268.5,249.7 L269.0,256.2 L269.5,262.3 L270.0,267.4 L270.5,271.2 L271.0,273.2 L271.5,273.3 L272.0,271.5 L272.5,267.9 L273.0,262.9 L273.5,256.8 L274.0,250.4 L274.5,244.1 L275.0,238.4 L275.5,234.0 L276.0,231.2 L276.5,230.3 L277.0,231.3 L277.5,234.2 L278.0,238.6 L278.5,244.3 L279.0,250.6 L279.5,257.1 L280.0,263.1 L280.5,268.1 L281.0,271.6 L281.5,273.3 L282.0,273.2 L282.5,271.1 L283.0,267.2 L283.5,262.0 L284.0,255.9 L284.5,249.4 L285.0,243.2 L285.5,237.7 L286.0,233.5 L286.5,231.0 L287.0,230.3 L287.5,231.6 L288.0,234.7 L288.5,239.4 L289.0,245.2 L289.5,251.6 L290.0,258.0 L290.5,263.9 L291.0,268.7 L291.5,272.0 L292.0,273.4 L292.5,273.0 L293.0,270.6 L293.5,266.6 L294.0,261.2 L294.5,255.0 L295.0,248.5 L295.5,242.3 L296.0,237.0 L296.5,233.0 L297.0,230.8 L297.5,230.4 L298.0,232.0 L298.5,235.3 L299.0,240.2 L299.5,246.1 L300.0,252.5 L300.5,258.9 L301.0,264.7 L301.5,269.3 L302.0,272.3 L302.5,273.5 L303.0,272.7 L303.5,270.1 L304.0,265.8 L304.5,260.3 L305.0,254.0 L305.5,247.6 L306.0,241.5 L306.5,236.3 L307.0,232.6 L307.5,230.6 L308.0,230.5 L308.5,232.4 L309.0,236.0 L309.5,241.0 L310.0,247.0 L310.5,253.5 L311.0,259.8 L311.5,265.4 L312.0,269.8 L312.5,272.6 L313.0,273.5 L313.5,272.5 L314.0,269.6 L314.5,265.1 L315.0,259.4 L315.5,253.1 L316.0,246.6 L316.5,240.6 L317.0,235.7 L317.5,232.2 L318.0,230.5 L318.5,230.7 L319.0,232.8 L319.5,236.6 L320.0,241.8 L320.5,248.0 L321.0,254.4 L321.5,260.7 L322.0,266.2 L322.5,270.3 L323.0,272.8 L323.5,273.5 L324.0,272.2 L324.5,269.0 L325.0,264.3 L325.5,258.5 L326.0,252.1 L326.5,245.7 L327.0,239.8 L327.5,235.1 L328.0,231.8 L328.5,230.4 L329.0,230.9 L329.5,233.2 L330.0,237.3 L330.5,242.7 L331.0,248.9 L331.5,255.4 L332.0,261.6 L332.5,266.9 L333.0,270.8 L333.5,273.1 L334.0,273.4 L334.5,271.8 L335.0,268.4 L335.5,263.5 L336.0,257.6 L336.5,251.2 L337.0,244.8 L337.5,239.1 L338.0,234.5 L338.5,231.5 L339.0,230.3 L339.5,231.1 L340.0,233.7 L340.5,238.0 L341.0,243.6 L341.5,249.8 L342.0,256.3 L342.5,262.4 L343.0,267.5 L343.5,271.2 L344.0,273.2 L344.5,273.3 L345.0,271.4 L345.5,267.8 L346.0,262.7 L346.5,256.7 L347.0,250.2 L347.5,243.9 L348.0,238.3 L348.5,233.9 L349.0,231.2 L349.5,230.3 L350.0,231.4 L350.5,234.3 L351.0,238.8 L351.5,244.4 L352.0,250.8 L352.5,257.2 L353.0,263.2 L353.5,268.2 L354.0,271.7 L354.5,273.4 L355.0,273.1 L355.5,271.0 L356.0,267.1 L356.5,261.9 L357.0,255.8 L357.5,249.3 L358.0,243.0 L358.5,237.6 L359.0,233.4 L359.5,230.9 L360.0,230.3 L360.5,231.7 L361.0,234.8 L361.5,239.5 L362.0,245.3 L362.5,251.7 L363.0,258.2 L363.5,264.0 L364.0,268.8 L364.5,272.0 L365.0,273.4 L365.5,272.9 L366.0,270.5 L366.5,266.4 L367.0,261.0 L367.5,254.8 L368.0,248.3 L368.5,242.2 L369.0,236.9 L369.5,233.0 L370.0,230.7 L370.5,230.4 L371.0,232.0 L371.5,235.4 L372.0,240.3 L372.5,246.3 L373.0,252.7 L373.5,259.1 L374.0,264.8 L374.5,269.4 L375.0,272.3 L375.5,273.5 L376.0,272.7 L376.5,270.0 L377.0,265.7 L377.5,260.2 L378.0,253.9 L378.5,247.4 L379.0,241.3 L379.5,236.2 L380.0,232.5 L380.5,230.6 L381.0,230.5 L381.5,232.4 L382.0,236.1 L382.5,241.1 L383.0,247.2 L383.5,253.7 L384.0,260.0 L384.5,265.5 L385.0,269.9 L385.5,272.6 L386.0,273.5 L386.5,272.4 L387.0,269.5 L387.5,265.0 L388.0,259.3 L388.5,252.9 L389.0,246.5 L389.5,240.5 L390.0,235.6 L390.5,232.1 L391.0,230.4 L391.5,230.7 L392.0,232.9 L392.5,236.7 L393.0,242.0 L393.5,248.1 L394.0,254.6 L394.5,260.8 L395.0,266.3 L395.5,270.4 L396.0,272.9 L396.5,273.5 L397.0,272.1 L397.5,268.9 L398.0,264.2 L398.5,258.4 L399.0,252.0 L399.5,245.6 L400.0,239.7 L400.5,235.0 L401.0,231.8 L401.5,230.3 L402.0,230.9 L402.5,233.3 L403.0,237.4 L403.5,242.8 L404.0,249.1 L404.5,255.5 L405.0,261.7 L405.5,267.0 L406.0,270.9 L406.5,273.1 L407.0,273.4 L407.5,271.7 L408.0,268.3 L408.5,263.4 L409.0,257.5 L409.5,251.0 L410.0,244.7 L410.5,238.9 L411.0,234.4 L411.5,231.4 L412.0,230.3 L412.5,231.1 L413.0,233.8 L413.5,238.1 L414.0,243.7 L414.5,250.0 L415.0,256.5 L415.5,262.5 L416.0,267.6 L416.5,271.3 L417.0,273.3 L417.5,273.3 L418.0,271.3 L418.5,267.7 L419.0,262.6 L419.5,256.5 L420.0,250.1 L420.5,243.8 L421.0,238.2 L421.5,233.9 L422.0,231.1 L422.5,230.3 L423.0,231.4 L423.5,234.4 L424.0,238.9 L424.5,244.6 L425.0,251.0 L425.5,257.4 L426.0,263.4 L426.5,268.3 L427.0,271.7 L427.5,273.4 L428.0,273.1 L428.5,270.9 L429.0,267.0 L429.5,261.8 L430.0,255.6 L430.5,249.1 L431.0,242.9 L431.5,237.5 L432.0,233.4 L432.5,230.9 L433.0,230.3 L433.5,231.7 L434.0,234.9 L434.5,239.7 L435.0,245.5 L435.5,251.9 L436.0,258.3 L436.5,264.1 L437.0,268.9 L437.5,272.1 L438.0,273.5 L438.5,272.9 L439.0,270.4 L439.5,266.3 L440.0,260.9 L440.5,254.7 L441.0,248.2 L441.5,242.0 L442.0,236.8 L442.5,232.9 L443.0,230.7 L443.5,230.4 L444.0,232.1 L444.5,235.5 L445.0,240.5 L445.5,246.4 L446.0,252.9 L446.5,259.2 L447.0,264.9 L447.5,269.4 L448.0,272.4 L448.5,273.5 L449.0,272.7 L449.5,269.9 L450.0,265.6 L450.5,260.0 L451.0,253.7 L451.5,247.2 L452.0,241.2 L452.5,236.1 L453.0,232.4 L453.5,230.5 L454.0,230.6 L454.5,232.5 L455.0,236.2 L455.5,241.3 L456.0,247.3 L456.5,253.8 L457.0,260.1 L457.5,265.7 L458.0,270.0 L458.5,272.7 L459.0,273.5 L459.5,272.4 L460.0,269.4 L460.5,264.8 L461.0,259.1 L461.5,252.8 L462.0,246.3 L462.5,240.4 L463.0,235.5 L463.5,232.1 L464.0,230.4 L464.5,230.7 L465.0,232.9 L465.5,236.8 L466.0,242.1 L466.5,248.3 L467.0,254.8 L467.5,261.0" fill="none" stroke="#1fa81f" stroke-width="2.8" stroke-opacity="0.45" stroke-linejoin="round"/><path d="M40.0,261.0 L40.5,266.4 L41.0,270.5 L41.5,272.9 L42.0,273.4 L42.5,272.0 L43.0,268.8 L43.5,264.1 L44.0,258.2 L44.5,251.8 L45.0,245.4 L45.5,239.6 L46.0,234.9 L46.5,231.7 L47.0,230.3 L47.5,230.9 L48.0,233.4 L48.5,237.5 L49.0,243.0 L49.5,249.2 L50.0,255.7 L50.5,261.8 L51.0,267.1 L51.5,271.0 L52.0,273.1 L52.5,273.4 L53.0,271.7 L53.5,268.2 L54.0,263.3 L54.5,257.3 L55.0,250.9 L55.5,244.5 L56.0,238.8 L56.5,234.3 L57.0,231.4 L57.5,230.3 L58.0,231.2 L58.5,233.9 L59.0,238.3 L59.5,243.9 L60.0,250.2 L60.5,256.6 L61.0,262.7 L61.5,267.7 L62.0,271.4 L62.5,273.3 L63.0,273.2 L63.5,271.3 L64.0,267.6 L64.5,262.5 L65.0,256.4 L65.5,249.9 L66.0,243.6 L66.5,238.1 L67.0,233.8 L67.5,231.1 L68.0,230.3 L68.5,231.5 L69.0,234.5 L69.5,239.0 L70.0,244.7 L70.5,251.1 L71.0,257.6 L71.5,263.5 L72.0,268.4 L72.5,271.8 L73.0,273.4 L73.5,273.1 L74.0,270.8 L74.5,266.9 L75.0,261.6 L75.5,255.4 L76.0,249.0 L76.5,242.7 L77.0,237.4 L77.5,233.3 L78.0,230.9 L78.5,230.4 L79.0,231.8 L79.5,235.0 L80.0,239.8 L80.5,245.6 L81.0,252.1 L81.5,258.5 L82.0,264.3 L82.5,269.0 L83.0,272.1 L83.5,273.5 L84.0,272.9 L84.5,270.4 L85.0,266.2 L85.5,260.8 L86.0,254.5 L86.5,248.0 L87.0,241.9 L87.5,236.7 L88.0,232.8 L88.5,230.7 L89.0,230.4 L89.5,232.2 L90.0,235.6 L90.5,240.6 L91.0,246.6 L91.5,253.0 L92.0,259.4 L92.5,265.0 L93.0,269.5 L93.5,272.4 L94.0,273.5 L94.5,272.6 L95.0,269.8 L95.5,265.5 L96.0,259.9 L96.5,253.6 L97.0,247.1 L97.5,241.1 L98.0,236.0 L98.5,232.4 L99.0,230.5 L99.5,230.6 L100.0,232.6 L100.5,236.3 L101.0,241.4 L101.5,247.5 L102.0,254.0 L102.5,260.3 L103.0,265.8 L103.5,270.1 L104.0,272.7 L104.5,273.5 L105.0,272.3 L105.5,269.3 L106.0,264.7 L106.5,259.0 L107.0,252.6 L107.5,246.2 L108.0,240.2 L108.5,235.4 L109.0,232.0 L109.5,230.4 L110.0,230.7 L110.5,233.0 L111.0,237.0 L111.5,242.3 L112.0,248.4 L112.5,254.9 L113.0,261.1 L113.5,266.5 L114.0,270.6 L114.5,273.0 L115.0,273.4 L115.5,272.0 L116.0,268.7 L116.5,263.9 L117.0,258.1 L117.5,251.7 L118.0,245.3 L118.5,239.5 L119.0,234.8 L119.5,231.6 L120.0,230.3 L120.5,231.0 L121.0,233.5 L121.5,237.7 L122.0,243.1 L122.5,249.4 L123.0,255.9 L123.5,262.0 L124.0,267.2 L124.5,271.0 L125.0,273.1 L125.5,273.3 L126.0,271.6 L126.5,268.1 L127.0,263.1 L127.5,257.2 L128.0,250.7 L128.5,244.4 L129.0,238.7 L129.5,234.2 L130.0,231.3 L130.5,230.3 L131.0,231.2 L131.5,234.0 L132.0,238.4 L132.5,244.0 L133.0,250.3 L133.5,256.8 L134.0,262.8 L134.5,267.9 L135.0,271.5 L135.5,273.3 L136.0,273.2 L136.5,271.2 L137.0,267.5 L137.5,262.3 L138.0,256.2 L138.5,249.8 L139.0,243.5 L139.5,237.9 L140.0,233.7 L140.5,231.1 L141.0,230.3 L141.5,231.5 L142.0,234.5 L142.5,239.1 L143.0,244.9 L143.5,251.3 L144.0,257.7 L144.5,263.6 L145.0,268.5 L145.5,271.8 L146.0,273.4 L146.5,273.0 L147.0,270.8 L147.5,266.8 L148.0,261.5 L148.5,255.3 L149.0,248.8 L149.5,242.6 L150.0,237.2 L150.5,233.2 L151.0,230.8 L151.5,230.4 L152.0,231.8 L152.5,235.1 L153.0,239.9 L153.5,245.8 L154.0,252.2 L154.5,258.6 L155.0,264.4 L155.5,269.1 L156.0,272.2 L156.5,273.5 L157.0,272.8 L157.5,270.3 L158.0,266.1 L158.5,260.6 L159.0,254.3 L159.5,247.9 L160.0,241.8 L160.5,236.6 L161.0,232.7 L161.5,230.6 L162.0,230.5 L162.5,232.2 L163.0,235.7 L163.5,240.7 L164.0,246.7 L164.5,253.2 L165.0,259.5 L165.5,265.2 L166.0,269.6 L166.5,272.5 L167.0,273.5 L167.5,272.6 L168.0,269.8 L168.5,265.3 L169.0,259.7 L169.5,253.4 L170.0,246.9 L170.5,240.9 L171.0,235.9 L171.5,232.3 L172.0,230.5 L172.5,230.6 L173.0,232.6 L173.5,236.4 L174.0,241.6 L174.5,247.7 L175.0,254.1 L175.5,260.4 L176.0,265.9 L176.5,270.2 L177.0,272.8 L177.5,273.5 L178.0,272.3 L178.5,269.2 L179.0,264.6 L179.5,258.8 L180.0,252.4 L180.5,246.0 L181.0,240.1 L181.5,235.3 L182.0,231.9 L182.5,230.4 L183.0,230.8 L183.5,233.1 L184.0,237.1 L184.5,242.4 L185.0,248.6 L185.5,255.1 L186.0,261.3 L186.5,266.6 L187.0,270.6 L187.5,273.0 L188.0,273.4 L188.5,271.9 L189.0,268.6 L189.5,263.8 L190.0,257.9 L190.5,251.5 L191.0,245.1 L191.5,239.3 L192.0,234.7 L192.5,231.6 L193.0,230.3 L193.5,231.0 L194.0,233.6 L194.5,237.8 L195.0,243.3 L195.5,249.5 L196.0,256.0 L196.5,262.1 L197.0,267.3 L197.5,271.1 L198.0,273.2 L198.5,273.3 L199.0,271.5 L199.5,268.0 L200.0,263.0 L200.5,257.0 L201.0,250.5 L201.5,244.2 L202.0,238.6 L202.5,234.1 L203.0,231.3 L203.5,230.3 L204.0,231.3 L204.5,234.1 L205.0,238.5 L205.5,244.1 L206.0,250.5 L206.5,256.9 L207.0,262.9 L207.5,268.0 L208.0,271.5 L208.5,273.3 L209.0,273.2 L209.5,271.1 L210.0,267.3 L210.5,262.2 L211.0,256.1 L211.5,249.6 L212.0,243.3 L212.5,237.8 L213.0,233.6 L213.5,231.0 L214.0,230.3 L214.5,231.6 L215.0,234.6 L215.5,239.3 L216.0,245.0 L216.5,251.4 L217.0,257.9 L217.5,263.8 L218.0,268.6 L218.5,271.9 L219.0,273.4 L219.5,273.0 L220.0,270.7 L220.5,266.7 L221.0,261.3 L221.5,255.1 L222.0,248.7 L222.5,242.5 L223.0,237.1 L223.5,233.1 L224.0,230.8 L224.5,230.4 L225.0,231.9 L225.5,235.2 L226.0,240.1 L226.5,246.0 L227.0,252.4 L227.5,258.8 L228.0,264.5 L228.5,269.2 L229.0,272.2 L229.5,273.5 L230.0,272.8 L230.5,270.2 L231.0,266.0 L231.5,260.5 L232.0,254.2 L232.5,247.7 L233.0,241.6 L233.5,236.4 L234.0,232.7 L234.5,230.6 L235.0,230.5 L235.5,232.3 L236.0,235.9 L236.5,240.9 L237.0,246.9 L237.5,253.3 L238.0,259.7 L238.5,265.3 L239.0,269.7 L239.5,272.5 L240.0,273.5 L240.5,272.5 L241.0,269.7 L241.5,265.2 L242.0,259.6 L242.5,253.2 L243.0,246.8 L243.5,240.8 L244.0,235.8 L244.5,232.2 L245.0,230.5 L245.5,230.6 L246.0,232.7 L246.5,236.5 L247.0,241.7 L247.5,247.8 L248.0,254.3 L248.5,260.5 L249.0,266.0 L249.5,270.2 L250.0,272.8 L250.5,273.5 L251.0,272.2 L251.5,269.1 L252.0,264.5 L252.5,258.7 L253.0,252.3 L253.5,245.9 L254.0,240.0 L254.5,235.2 L255.0,231.9 L255.5,230.4 L256.0,230.8 L256.5,233.2 L257.0,237.2 L257.5,242.5 L258.0,248.7 L258.5,255.2 L259.0,261.4 L259.5,266.7 L260.0,270.7 L260.5,273.0 L261.0,273.4 L261.5,271.9 L262.0,268.5 L262.5,263.7 L263.0,257.8 L263.5,251.3 L264.0,245.0 L264.5,239.2 L265.0,234.6 L265.5,231.5 L266.0,230.3 L266.5,231.0 L267.0,233.6 L267.5,237.9 L268.0,243.4 L268.5,249.7 L269.0,256.2 L269.5,262.3 L270.0,267.4 L270.5,271.2 L271.0,273.2 L271.5,273.3 L272.0,271.5 L272.5,267.9 L273.0,262.9 L273.5,256.8 L274.0,250.4 L274.5,244.1 L275.0,238.4 L275.5,234.0 L276.0,231.2 L276.5,230.3 L277.0,231.3 L277.5,234.2 L278.0,238.6 L278.5,244.3 L279.0,250.6 L279.5,257.1 L280.0,263.1 L280.5,268.1 L281.0,271.6 L281.5,273.3 L282.0,273.2 L282.5,271.1 L283.0,267.2 L283.5,262.0 L284.0,255.9 L284.5,249.4 L285.0,243.2 L285.5,237.7 L286.0,233.5 L286.5,231.0 L287.0,230.3 L287.5,231.6 L288.0,234.7 L288.5,239.4 L289.0,245.2 L289.5,251.6 L290.0,258.0 L290.5,263.9 L291.0,268.7 L291.5,272.0 L292.0,273.4 L292.5,273.0 L293.0,270.6 L293.5,266.6 L294.0,261.2 L294.5,255.0 L295.0,248.5 L295.5,242.3 L296.0,237.0 L296.5,233.0 L297.0,230.8 L297.5,230.4 L298.0,232.0 L298.5,235.3 L299.0,240.2 L299.5,246.1 L300.0,252.5 L300.5,258.9 L301.0,264.7 L301.5,269.3 L302.0,272.3 L302.5,273.5 L303.0,272.7 L303.5,270.1 L304.0,265.8 L304.5,260.3 L305.0,254.0 L305.5,247.6 L306.0,241.5 L306.5,236.3 L307.0,232.6 L307.5,230.6 L308.0,230.5 L308.5,232.4 L309.0,236.0 L309.5,241.0 L310.0,247.0 L310.5,253.5 L311.0,259.8 L311.5,265.4 L312.0,269.8 L312.5,272.6 L313.0,273.5 L313.5,272.5 L314.0,269.6 L314.5,265.1 L315.0,259.4 L315.5,253.1 L316.0,246.6 L316.5,240.6 L317.0,235.7 L317.5,232.2 L318.0,230.5 L318.5,230.7 L319.0,232.8 L319.5,236.6 L320.0,241.8 L320.5,248.0 L321.0,254.4 L321.5,260.7 L322.0,266.2 L322.5,270.3 L323.0,272.8 L323.5,273.5 L324.0,272.2 L324.5,269.0 L325.0,264.3 L325.5,258.5 L326.0,252.1 L326.5,245.7 L327.0,239.8 L327.5,235.1 L328.0,231.8 L328.5,230.4 L329.0,230.9 L329.5,233.2 L330.0,237.3 L330.5,242.7 L331.0,248.9 L331.5,255.4 L332.0,261.6 L332.5,266.9 L333.0,270.8 L333.5,273.1 L334.0,273.4 L334.5,271.8 L335.0,268.4 L335.5,263.5 L336.0,257.6 L336.5,251.2 L337.0,244.8 L337.5,239.1 L338.0,234.5 L338.5,231.5 L339.0,230.3 L339.5,231.1 L340.0,233.7 L340.5,238.0 L341.0,243.6 L341.5,249.8 L342.0,256.3 L342.5,262.4 L343.0,267.5 L343.5,271.2 L344.0,273.2 L344.5,273.3 L345.0,271.4 L345.5,267.8 L346.0,262.7 L346.5,256.7 L347.0,250.2 L347.5,243.9 L348.0,238.3 L348.5,233.9 L349.0,231.2 L349.5,230.3 L350.0,231.4 L350.5,234.3 L351.0,238.8 L351.5,244.4 L352.0,250.8 L352.5,257.2 L353.0,263.2 L353.5,268.2 L354.0,271.7 L354.5,273.4 L355.0,273.1 L355.5,271.0 L356.0,267.1 L356.5,261.9 L357.0,255.8 L357.5,249.3 L358.0,243.0 L358.5,237.6 L359.0,233.4 L359.5,230.9 L360.0,230.3 L360.5,231.7 L361.0,234.8 L361.5,239.5 L362.0,245.3 L362.5,251.7 L363.0,258.2 L363.5,264.0 L364.0,268.8 L364.5,272.0 L365.0,273.4 L365.5,272.9 L366.0,270.5 L366.5,266.4 L367.0,261.0 L367.5,254.8 L368.0,248.3 L368.5,242.2 L369.0,236.9 L369.5,233.0 L370.0,230.7 L370.5,230.4 L371.0,232.0 L371.5,235.4 L372.0,240.3 L372.5,246.3 L373.0,252.7 L373.5,259.1 L374.0,264.8 L374.5,269.4 L375.0,272.3 L375.5,273.5 L376.0,272.7 L376.5,270.0 L377.0,265.7 L377.5,260.2 L378.0,253.9 L378.5,247.4 L379.0,241.3 L379.5,236.2 L380.0,232.5 L380.5,230.6 L381.0,230.5 L381.5,232.4 L382.0,236.1 L382.5,241.1 L383.0,247.2 L383.5,253.7 L384.0,260.0 L384.5,265.5 L385.0,269.9 L385.5,272.6 L386.0,273.5 L386.5,272.4 L387.0,269.5 L387.5,265.0 L388.0,259.3 L388.5,252.9 L389.0,246.5 L389.5,240.5 L390.0,235.6 L390.5,232.1 L391.0,230.4 L391.5,230.7 L392.0,232.9 L392.5,236.7 L393.0,242.0 L393.5,248.1 L394.0,254.6 L394.5,260.8 L395.0,266.3 L395.5,270.4 L396.0,272.9 L396.5,273.5 L397.0,272.1 L397.5,268.9 L398.0,264.2 L398.5,258.4 L399.0,252.0 L399.5,245.6 L400.0,239.7 L400.5,235.0 L401.0,231.8 L401.5,230.3 L402.0,230.9 L402.5,233.3 L403.0,237.4 L403.5,242.8 L404.0,249.1 L404.5,255.5 L405.0,261.7 L405.5,267.0 L406.0,270.9 L406.5,273.1 L407.0,273.4 L407.5,271.7 L408.0,268.3 L408.5,263.4 L409.0,257.5 L409.5,251.0 L410.0,244.7 L410.5,238.9 L411.0,234.4 L411.5,231.4 L412.0,230.3 L412.5,231.1 L413.0,233.8 L413.5,238.1 L414.0,243.7 L414.5,250.0 L415.0,256.5 L415.5,262.5 L416.0,267.6 L416.5,271.3 L417.0,273.3 L417.5,273.3 L418.0,271.3 L418.5,267.7 L419.0,262.6 L419.5,256.5 L420.0,250.1 L420.5,243.8 L421.0,238.2 L421.5,233.9 L422.0,231.1 L422.5,230.3 L423.0,231.4 L423.5,234.4 L424.0,238.9 L424.5,244.6 L425.0,251.0 L425.5,257.4 L426.0,263.4 L426.5,268.3 L427.0,271.7 L427.5,273.4 L428.0,273.1 L428.5,270.9 L429.0,267.0 L429.5,261.8 L430.0,255.6 L430.5,249.1 L431.0,242.9 L431.5,237.5 L432.0,233.4 L432.5,230.9 L433.0,230.3 L433.5,231.7 L434.0,234.9 L434.5,239.7 L435.0,245.5 L435.5,251.9 L436.0,258.3 L436.5,264.1 L437.0,268.9 L437.5,272.1 L438.0,273.5 L438.5,272.9 L439.0,270.4 L439.5,266.3 L440.0,260.9 L440.5,254.7 L441.0,248.2 L441.5,242.0 L442.0,236.8 L442.5,232.9 L443.0,230.7 L443.5,230.4 L444.0,232.1 L444.5,235.5 L445.0,240.5 L445.5,246.4 L446.0,252.9 L446.5,259.2 L447.0,264.9 L447.5,269.4 L448.0,272.4 L448.5,273.5 L449.0,272.7 L449.5,269.9 L450.0,265.6 L450.5,260.0 L451.0,253.7 L451.5,247.2 L452.0,241.2 L452.5,236.1 L453.0,232.4 L453.5,230.5 L454.0,230.6 L454.5,232.5 L455.0,236.2 L455.5,241.3 L456.0,247.3 L456.5,253.8 L457.0,260.1 L457.5,265.7 L458.0,270.0 L458.5,272.7 L459.0,273.5 L459.5,272.4 L460.0,269.4 L460.5,264.8 L461.0,259.1 L461.5,252.8 L462.0,246.3 L462.5,240.4 L463.0,235.5 L463.5,232.1 L464.0,230.4 L464.5,230.7 L465.0,232.9 L465.5,236.8 L466.0,242.1 L466.5,248.3 L467.0,254.8 L467.5,261.0" fill="none" stroke="#2cfa2c" stroke-width="1.35" stroke-linejoin="round"/><line x1="30.6" x2="30.6" y1="223.00" y2="279.80" stroke="#333" stroke-width="0.9"/><line x1="30.2" x2="37.9" y1="223.00" y2="223.00" stroke="#e07c7c" stroke-width="1"/><line x1="30.6" x2="34.2" y1="228.68" y2="228.68" stroke="#333" stroke-width="0.9"/><line x1="30.6" x2="34.2" y1="234.36" y2="234.36" stroke="#333" stroke-width="0.9"/><line x1="30.6" x2="34.2" y1="240.04" y2="240.04" stroke="#333" stroke-width="0.9"/><line x1="30.6" x2="34.2" y1="245.72" y2="245.72" stroke="#333" stroke-width="0.9"/><line x1="30.2" x2="37.9" y1="251.40" y2="251.40" stroke="#e07c7c" stroke-width="1"/><line x1="30.6" x2="34.2" y1="257.08" y2="257.08" stroke="#333" stroke-width="0.9"/><line x1="30.6" x2="34.2" y1="262.76" y2="262.76" stroke="#333" stroke-width="0.9"/><line x1="30.6" x2="34.2" y1="268.44" y2="268.44" stroke="#333" stroke-width="0.9"/><line x1="30.6" x2="34.2" y1="274.12" y2="274.12" stroke="#333" stroke-width="0.9"/><line x1="30.2" x2="37.9" y1="279.80" y2="279.80" stroke="#e07c7c" stroke-width="1"/><line x1="40.00" x2="467.50" y1="290.2" y2="290.2" stroke="#3c3c3c" stroke-width="1"/><line x1="40.00" x2="40.00" y1="282.4" y2="290.6" stroke="#e07c7c" stroke-width="1"/><line x1="53.36" x2="53.36" y1="285.8" y2="290.6" stroke="#444" stroke-width="0.8"/><line x1="66.72" x2="66.72" y1="285.8" y2="290.6" stroke="#444" stroke-width="0.8"/><line x1="80.08" x2="80.08" y1="285.8" y2="290.6" stroke="#444" stroke-width="0.8"/><line x1="93.44" x2="93.44" y1="282.4" y2="290.6" stroke="#e07c7c" stroke-width="1"/><line x1="106.80" x2="106.80" y1="285.8" y2="290.6" stroke="#444" stroke-width="0.8"/><line x1="120.16" x2="120.16" y1="285.8" y2="290.6" stroke="#444" stroke-width="0.8"/><line x1="133.52" x2="133.52" y1="285.8" y2="290.6" stroke="#444" stroke-width="0.8"/><line x1="146.88" x2="146.88" y1="282.4" y2="290.6" stroke="#e07c7c" stroke-width="1"/><line x1="160.23" x2="160.23" y1="285.8" y2="290.6" stroke="#444" stroke-width="0.8"/><line x1="173.59" x2="173.59" y1="285.8" y2="290.6" stroke="#444" stroke-width="0.8"/><line x1="186.95" x2="186.95" y1="285.8" y2="290.6" stroke="#444" stroke-width="0.8"/><line x1="200.31" x2="200.31" y1="282.4" y2="290.6" stroke="#e07c7c" stroke-width="1"/><line x1="213.67" x2="213.67" y1="285.8" y2="290.6" stroke="#444" stroke-width="0.8"/><line x1="227.03" x2="227.03" y1="285.8" y2="290.6" stroke="#444" stroke-width="0.8"/><line x1="240.39" x2="240.39" y1="285.8" y2="290.6" stroke="#444" stroke-width="0.8"/><line x1="253.75" x2="253.75" y1="282.4" y2="290.6" stroke="#e07c7c" stroke-width="1"/><line x1="267.11" x2="267.11" y1="285.8" y2="290.6" stroke="#444" stroke-width="0.8"/><line x1="280.47" x2="280.47" y1="285.8" y2="290.6" stroke="#444" stroke-width="0.8"/><line x1="293.83" x2="293.83" y1="285.8" y2="290.6" stroke="#444" stroke-width="0.8"/><line x1="307.19" x2="307.19" y1="282.4" y2="290.6" stroke="#e07c7c" stroke-width="1"/><line x1="320.55" x2="320.55" y1="285.8" y2="290.6" stroke="#444" stroke-width="0.8"/><line x1="333.91" x2="333.91" y1="285.8" y2="290.6" stroke="#444" stroke-width="0.8"/><line x1="347.27" x2="347.27" y1="285.8" y2="290.6" stroke="#444" stroke-width="0.8"/><line x1="360.62" x2="360.62" y1="282.4" y2="290.6" stroke="#e07c7c" stroke-width="1"/><line x1="373.98" x2="373.98" y1="285.8" y2="290.6" stroke="#444" stroke-width="0.8"/><line x1="387.34" x2="387.34" y1="285.8" y2="290.6" stroke="#444" stroke-width="0.8"/><line x1="400.70" x2="400.70" y1="285.8" y2="290.6" stroke="#444" stroke-width="0.8"/><line x1="414.06" x2="414.06" y1="282.4" y2="290.6" stroke="#e07c7c" stroke-width="1"/><line x1="427.42" x2="427.42" y1="285.8" y2="290.6" stroke="#444" stroke-width="0.8"/><line x1="440.78" x2="440.78" y1="285.8" y2="290.6" stroke="#444" stroke-width="0.8"/><line x1="454.14" x2="454.14" y1="285.8" y2="290.6" stroke="#444" stroke-width="0.8"/><line x1="467.50" x2="467.50" y1="282.4" y2="290.6" stroke="#e07c7c" stroke-width="1"/></svg>
<span class="t" style="left:19.36px;top:220.10px;height:7.20px;line-height:7.20px;font-size:6.00px;color:#111;font-family:'Liberation Sans',sans-serif;">0.1</span>
<span class="t" style="left:19.36px;top:248.60px;height:7.20px;line-height:7.20px;font-size:6.00px;color:#111;font-family:'Liberation Sans',sans-serif;">0.0</span>
<span class="t" style="left:17.36px;top:276.60px;height:7.20px;line-height:7.20px;font-size:6.00px;color:#111;font-family:'Liberation Sans',sans-serif;">-0.1</span>
<span class="t" style="left:38.88px;top:291.18px;height:7.44px;line-height:7.44px;font-size:6.20px;color:#111;font-family:'Liberation Sans',sans-serif;">0</span>
<span class="t" style="left:89.99px;top:291.18px;height:7.44px;line-height:7.44px;font-size:6.20px;color:#111;font-family:'Liberation Sans',sans-serif;">64</span>
<span class="t" style="left:141.70px;top:291.18px;height:7.44px;line-height:7.44px;font-size:6.20px;color:#111;font-family:'Liberation Sans',sans-serif;">128</span>
<span class="t" style="left:195.14px;top:291.18px;height:7.44px;line-height:7.44px;font-size:6.20px;color:#111;font-family:'Liberation Sans',sans-serif;">192</span>
<span class="t" style="left:248.58px;top:291.18px;height:7.44px;line-height:7.44px;font-size:6.20px;color:#111;font-family:'Liberation Sans',sans-serif;">256</span>
<span class="t" style="left:302.02px;top:291.18px;height:7.44px;line-height:7.44px;font-size:6.20px;color:#111;font-family:'Liberation Sans',sans-serif;">320</span>
<span class="t" style="left:355.45px;top:291.18px;height:7.44px;line-height:7.44px;font-size:6.20px;color:#111;font-family:'Liberation Sans',sans-serif;">384</span>
<span class="t" style="left:408.89px;top:291.18px;height:7.44px;line-height:7.44px;font-size:6.20px;color:#111;font-family:'Liberation Sans',sans-serif;">448</span>
<span class="t" style="left:457.66px;top:291.18px;height:7.44px;line-height:7.44px;font-size:6.20px;color:#111;font-family:'Liberation Sans',sans-serif;">512</span>
<div style="left:16.70px;top:303.70px;width:451.50px;height:90.80px;background:#efeddf;border:1px solid;border-color:#f8f7f0 #918e80 #918e80 #f8f7f0;"></div>
<span class="t" style="left:196.50px;top:305.54px;height:9.12px;line-height:9.12px;font-size:7.60px;color:#111;font-family:'Liberation Sans',sans-serif;font-weight:bold;transform:scaleX(1.0103);">Spectrum Analyzer (1 Hz)</span>
<svg width="600" height="442" style="left:0;top:0"><rect x="41.60" y="320.60" width="423.70" height="53.20" fill="#030358"/></svg>
<svg width="600" height="434" style="left:0;top:0"><line x1="41.60" x2="465.30" y1="331.32" y2="331.32" stroke="#8a8a9a" stroke-width="0.8"/><line x1="41.60" x2="465.30" y1="342.04" y2="342.04" stroke="#8a8a9a" stroke-width="0.8"/><line x1="41.60" x2="465.30" y1="352.76" y2="352.76" stroke="#8a8a9a" stroke-width="0.8"/><line x1="41.60" x2="465.30" y1="363.48" y2="363.48" stroke="#8a8a9a" stroke-width="0.8"/><rect x="183.28" y="353.00" width="4.21" height="21.20" fill="#ffff70" stroke="#1a1a30" stroke-width="0.7"/><rect x="187.99" y="343.80" width="4.21" height="30.40" fill="#ffff70" stroke="#1a1a30" stroke-width="0.7"/><rect x="192.70" y="351.00" width="4.21" height="23.20" fill="#ffff70" stroke="#1a1a30" stroke-width="0.7"/><line x1="31.3" x2="31.3" y1="320.60" y2="374.20" stroke="#333" stroke-width="0.9"/><line x1="30.9" x2="39" y1="320.60" y2="320.60" stroke="#e07c7c" stroke-width="1"/><line x1="31.3" x2="35.2" y1="322.74" y2="322.74" stroke="#333" stroke-width="0.8"/><line x1="31.3" x2="35.2" y1="324.89" y2="324.89" stroke="#333" stroke-width="0.8"/><line x1="31.3" x2="35.2" y1="327.03" y2="327.03" stroke="#333" stroke-width="0.8"/><line x1="31.3" x2="35.2" y1="329.18" y2="329.18" stroke="#333" stroke-width="0.8"/><line x1="30.9" x2="39" y1="331.32" y2="331.32" stroke="#e07c7c" stroke-width="1"/><line x1="31.3" x2="35.2" y1="333.46" y2="333.46" stroke="#333" stroke-width="0.8"/><line x1="31.3" x2="35.2" y1="335.61" y2="335.61" stroke="#333" stroke-width="0.8"/><line x1="31.3" x2="35.2" y1="337.75" y2="337.75" stroke="#333" stroke-width="0.8"/><line x1="31.3" x2="35.2" y1="339.90" y2="339.90" stroke="#333" stroke-width="0.8"/><line x1="30.9" x2="39" y1="342.04" y2="342.04" stroke="#e07c7c" stroke-width="1"/><line x1="31.3" x2="35.2" y1="344.18" y2="344.18" stroke="#333" stroke-width="0.8"/><line x1="31.3" x2="35.2" y1="346.33" y2="346.33" stroke="#333" stroke-width="0.8"/><line x1="31.3" x2="35.2" y1="348.47" y2="348.47" stroke="#333" stroke-width="0.8"/><line x1="31.3" x2="35.2" y1="350.62" y2="350.62" stroke="#333" stroke-width="0.8"/><line x1="30.9" x2="39" y1="352.76" y2="352.76" stroke="#e07c7c" stroke-width="1"/><line x1="31.3" x2="35.2" y1="354.90" y2="354.90" stroke="#333" stroke-width="0.8"/><line x1="31.3" x2="35.2" y1="357.05" y2="357.05" stroke="#333" stroke-width="0.8"/><line x1="31.3" x2="35.2" y1="359.19" y2="359.19" stroke="#333" stroke-width="0.8"/><line x1="31.3" x2="35.2" y1="361.34" y2="361.34" stroke="#333" stroke-width="0.8"/><line x1="30.9" x2="39" y1="363.48" y2="363.48" stroke="#e07c7c" stroke-width="1"/><line x1="31.3" x2="35.2" y1="365.62" y2="365.62" stroke="#333" stroke-width="0.8"/><line x1="31.3" x2="35.2" y1="367.77" y2="367.77" stroke="#333" stroke-width="0.8"/><line x1="31.3" x2="35.2" y1="369.91" y2="369.91" stroke="#333" stroke-width="0.8"/><line x1="31.3" x2="35.2" y1="372.06" y2="372.06" stroke="#333" stroke-width="0.8"/><line x1="30.9" x2="39" y1="374.20" y2="374.20" stroke="#e07c7c" stroke-width="1"/><line x1="41.60" x2="465.30" y1="383.9" y2="383.9" stroke="#3c3c3c" stroke-width="1"/><line x1="41.60" x2="41.60" y1="376.4" y2="384.2" stroke="#e07c7c" stroke-width="1"/><line x1="51.02" x2="51.02" y1="380.0" y2="384.2" stroke="#444" stroke-width="0.8"/><line x1="60.43" x2="60.43" y1="380.0" y2="384.2" stroke="#444" stroke-width="0.8"/><line x1="69.85" x2="69.85" y1="380.0" y2="384.2" stroke="#444" stroke-width="0.8"/><line x1="79.26" x2="79.26" y1="380.0" y2="384.2" stroke="#444" stroke-width="0.8"/><line x1="88.68" x2="88.68" y1="376.4" y2="384.2" stroke="#e07c7c" stroke-width="1"/><line x1="98.09" x2="98.09" y1="380.0" y2="384.2" stroke="#444" stroke-width="0.8"/><line x1="107.51" x2="107.51" y1="380.0" y2="384.2" stroke="#444" stroke-width="0.8"/><line x1="116.92" x2="116.92" y1="380.0" y2="384.2" stroke="#444" stroke-width="0.8"/><line x1="126.34" x2="126.34" y1="380.0" y2="384.2" stroke="#444" stroke-width="0.8"/><line x1="135.76" x2="135.76" y1="376.4" y2="384.2" stroke="#e07c7c" stroke-width="1"/><line x1="145.17" x2="145.17" y1="380.0" y2="384.2" stroke="#444" stroke-width="0.8"/><line x1="154.59" x2="154.59" y1="380.0" y2="384.2" stroke="#444" stroke-width="0.8"/><line x1="164.00" x2="164.00" y1="380.0" y2="384.2" stroke="#444" stroke-width="0.8"/><line x1="173.42" x2="173.42" y1="380.0" y2="384.2" stroke="#444" stroke-width="0.8"/><line x1="182.83" x2="182.83" y1="376.4" y2="384.2" stroke="#e07c7c" stroke-width="1"/><line x1="192.25" x2="192.25" y1="380.0" y2="384.2" stroke="#444" stroke-width="0.8"/><line x1="201.66" x2="201.66" y1="380.0" y2="384.2" stroke="#444" stroke-width="0.8"/><line x1="211.08" x2="211.08" y1="380.0" y2="384.2" stroke="#444" stroke-width="0.8"/><line x1="220.50" x2="220.50" y1="380.0" y2="384.2" stroke="#444" stroke-width="0.8"/><line x1="229.91" x2="229.91" y1="376.4" y2="384.2" stroke="#e07c7c" stroke-width="1"/><line x1="239.33" x2="239.33" y1="380.0" y2="384.2" stroke="#444" stroke-width="0.8"/><line x1="248.74" x2="248.74" y1="380.0" y2="384.2" stroke="#444" stroke-width="0.8"/><line x1="258.16" x2="258.16" y1="380.0" y2="384.2" stroke="#444" stroke-width="0.8"/><line x1="267.57" x2="267.57" y1="380.0" y2="384.2" stroke="#444" stroke-width="0.8"/><line x1="276.99" x2="276.99" y1="376.4" y2="384.2" stroke="#e07c7c" stroke-width="1"/><line x1="286.40" x2="286.40" y1="380.0" y2="384.2" stroke="#444" stroke-width="0.8"/><line x1="295.82" x2="295.82" y1="380.0" y2="384.2" stroke="#444" stroke-width="0.8"/><line x1="305.24" x2="305.24" y1="380.0" y2="384.2" stroke="#444" stroke-width="0.8"/><line x1="314.65" x2="314.65" y1="380.0" y2="384.2" stroke="#444" stroke-width="0.8"/><line x1="324.07" x2="324.07" y1="376.4" y2="384.2" stroke="#e07c7c" stroke-width="1"/><line x1="333.48" x2="333.48" y1="380.0" y2="384.2" stroke="#444" stroke-width="0.8"/><line x1="342.90" x2="342.90" y1="380.0" y2="384.2" stroke="#444" stroke-width="0.8"/><line x1="352.31" x2="352.31" y1="380.0" y2="384.2" stroke="#444" stroke-width="0.8"/><line x1="361.73" x2="361.73" y1="380.0" y2="384.2" stroke="#444" stroke-width="0.8"/><line x1="371.14" x2="371.14" y1="376.4" y2="384.2" stroke="#e07c7c" stroke-width="1"/><line x1="380.56" x2="380.56" y1="380.0" y2="384.2" stroke="#444" stroke-width="0.8"/><line x1="389.98" x2="389.98" y1="380.0" y2="384.2" stroke="#444" stroke-width="0.8"/><line x1="399.39" x2="399.39" y1="380.0" y2="384.2" stroke="#444" stroke-width="0.8"/><line x1="408.81" x2="408.81" y1="380.0" y2="384.2" stroke="#444" stroke-width="0.8"/><line x1="418.22" x2="418.22" y1="376.4" y2="384.2" stroke="#e07c7c" stroke-width="1"/><line x1="427.64" x2="427.64" y1="380.0" y2="384.2" stroke="#444" stroke-width="0.8"/><line x1="437.05" x2="437.05" y1="380.0" y2="384.2" stroke="#444" stroke-width="0.8"/><line x1="446.47" x2="446.47" y1="380.0" y2="384.2" stroke="#444" stroke-width="0.8"/><line x1="455.88" x2="455.88" y1="380.0" y2="384.2" stroke="#444" stroke-width="0.8"/><line x1="465.30" x2="465.30" y1="376.4" y2="384.2" stroke="#e07c7c" stroke-width="1"/></svg>
<span class="t" style="left:19.40px;top:316.00px;height:7.80px;line-height:7.80px;font-size:6.50px;color:#111;font-family:'Liberation Sans',sans-serif;transform:scaleX(0.9406);">170</span>
<span class="t" style="left:19.40px;top:326.70px;height:7.80px;line-height:7.80px;font-size:6.50px;color:#111;font-family:'Liberation Sans',sans-serif;transform:scaleX(0.9406);">160</span>
<span class="t" style="left:19.40px;top:337.40px;height:7.80px;line-height:7.80px;font-size:6.50px;color:#111;font-family:'Liberation Sans',sans-serif;transform:scaleX(0.9406);">150</span>
<span class="t" style="left:19.40px;top:348.10px;height:7.80px;line-height:7.80px;font-size:6.50px;color:#111;font-family:'Liberation Sans',sans-serif;transform:scaleX(0.9406);">140</span>
<span class="t" style="left:19.40px;top:358.80px;height:7.80px;line-height:7.80px;font-size:6.50px;color:#111;font-family:'Liberation Sans',sans-serif;transform:scaleX(0.9406);">130</span>
<span class="t" style="left:19.40px;top:369.50px;height:7.80px;line-height:7.80px;font-size:6.50px;color:#111;font-family:'Liberation Sans',sans-serif;transform:scaleX(0.9406);">120</span>
<span class="t" style="left:40.65px;top:384.48px;height:7.44px;line-height:7.44px;font-size:6.20px;color:#111;font-family:'Liberation Sans',sans-serif;">10</span>
<span class="t" style="left:85.23px;top:384.48px;height:7.44px;line-height:7.44px;font-size:6.20px;color:#111;font-family:'Liberation Sans',sans-serif;">20</span>
<span class="t" style="left:132.31px;top:384.48px;height:7.44px;line-height:7.44px;font-size:6.20px;color:#111;font-family:'Liberation Sans',sans-serif;">30</span>
<span class="t" style="left:179.39px;top:384.48px;height:7.44px;line-height:7.44px;font-size:6.20px;color:#111;font-family:'Liberation Sans',sans-serif;">40</span>
<span class="t" style="left:226.46px;top:384.48px;height:7.44px;line-height:7.44px;font-size:6.20px;color:#111;font-family:'Liberation Sans',sans-serif;">50</span>
<span class="t" style="left:273.54px;top:384.48px;height:7.44px;line-height:7.44px;font-size:6.20px;color:#111;font-family:'Liberation Sans',sans-serif;">60</span>
<span class="t" style="left:320.62px;top:384.48px;height:7.44px;line-height:7.44px;font-size:6.20px;color:#111;font-family:'Liberation Sans',sans-serif;">70</span>
<span class="t" style="left:367.70px;top:384.48px;height:7.44px;line-height:7.44px;font-size:6.20px;color:#111;font-family:'Liberation Sans',sans-serif;">80</span>
<span class="t" style="left:414.77px;top:384.48px;height:7.44px;line-height:7.44px;font-size:6.20px;color:#111;font-family:'Liberation Sans',sans-serif;">90</span>
<span class="t" style="left:455.96px;top:384.48px;height:7.44px;line-height:7.44px;font-size:6.20px;color:#111;font-family:'Liberation Sans',sans-serif;">100</span>
<div style="left:2.40px;top:408.40px;width:116.10px;height:9.00px;background:#ece9d9;border-top:0.8px solid #b9b6a6;border-left:0.8px solid #b9b6a6;border-right:0.7px solid #fbfaf4;"></div>
<div style="left:120.50px;top:408.40px;width:114.00px;height:9.00px;background:#ece9d9;border-top:0.8px solid #b9b6a6;border-left:0.8px solid #b9b6a6;border-right:0.7px solid #fbfaf4;"></div>
<div style="left:236.50px;top:408.40px;width:115.50px;height:9.00px;background:#ece9d9;border-top:0.8px solid #b9b6a6;border-left:0.8px solid #b9b6a6;border-right:0.7px solid #fbfaf4;"></div>
<div style="left:354.00px;top:408.40px;width:115.50px;height:9.00px;background:#ece9d9;border-top:0.8px solid #b9b6a6;border-left:0.8px solid #b9b6a6;border-right:0.7px solid #fbfaf4;"></div>
<div style="left:471.50px;top:408.40px;width:125.50px;height:9.00px;background:#ece9d9;border-top:0.8px solid #b9b6a6;border-left:0.8px solid #b9b6a6;border-right:0.7px solid #fbfaf4;"></div>
<span class="t" style="left:4.60px;top:409.88px;height:8.04px;line-height:8.04px;font-size:6.70px;color:#111;font-family:'Liberation Sans',sans-serif;transform:scaleX(0.8925);">SPL Mode</span>
<span class="t" style="left:123.50px;top:409.88px;height:8.04px;line-height:8.04px;font-size:6.70px;color:#111;font-family:'Liberation Sans',sans-serif;transform:scaleX(0.9064);">Total Competitors: 0</span>
<span class="t" style="left:239.50px;top:409.88px;height:8.04px;line-height:8.04px;font-size:6.70px;color:#111;font-family:'Liberation Sans',sans-serif;transform:scaleX(0.9344);">Leaderboard</span>
<span class="t" style="left:355.50px;top:409.88px;height:8.04px;line-height:8.04px;font-size:6.70px;color:#111;font-family:'Liberation Sans',sans-serif;transform:scaleX(0.9213);">Rate: 0 FFT: 512 BW: 256 Hz</span>
<span class="t" style="left:473.00px;top:409.88px;height:8.04px;line-height:8.04px;font-size:6.70px;color:#111;font-family:'Liberation Sans',sans-serif;transform:scaleX(0.9458);">Network:</span>
<div style="left:1.80px;top:417.50px;width:595.20px;height:16.50px;background:linear-gradient(#2a5cc4 0,#3a84ea 10%,#3a84ea 16%,#2458d0 32%,#2258d6 60%,#2262e2 100%);"></div>
<div style="left:1.80px;top:417.50px;width:82.00px;height:16.50px;background:linear-gradient(#4a9a4a 0,#5cb85c 10%,#3f9e3f 24%,#35933a 70%,#2f8632 100%);border-radius:0 8px 8px 0;box-shadow:1px 0 2px rgba(0,0,40,.55);"></div>
<svg width="10" height="10" viewBox="0 0 10 10" style="left:8.6px;top:421px"><path d="M0.6 1.6 Q2.4 0.6 4.4 1.6 L4 4.6 Q2 3.6 0.2 4.6Z" fill="#e8532c"/><path d="M5.2 1.9 Q7.2 2.9 9.2 1.9 L8.8 4.9 Q6.8 5.9 4.8 4.9Z" fill="#6cc04a"/><path d="M0.1 5.4 Q2 4.4 3.9 5.4 L3.5 8.4 Q1.6 7.4 -0.3 8.4Z" fill="#4a8cf0"/><path d="M4.7 5.7 Q6.7 6.7 8.7 5.7 L8.3 8.7 Q6.3 9.7 4.3 8.7Z" fill="#f4c430"/></svg>
<span class="t" style="left:22.80px;top:419.92px;height:12.96px;line-height:12.96px;font-size:10.80px;color:#fff;font-family:'Liberation Sans',sans-serif;font-weight:bold;font-style:italic;transform:scaleX(0.9048);text-shadow:0.6px 0.8px 1px rgba(0,0,0,.5);">Käynnistä</span>
<div style="left:95.00px;top:422.00px;width:9.20px;height:8.00px;background:#16301a;border:0.9px solid #50544c;border-radius:1px;"><svg width="7.8" height="6.6" viewBox="0 0 8 7" preserveAspectRatio="none" style="left:0;top:0"><path d="M0.8 4.2 C2 1.2 3 1.2 4 3.4 S6 5.6 7 2.6" fill="none" stroke="#35e035" stroke-width="0.9"/></svg></div>
<div style="left:182.50px;top:419.20px;width:92.00px;height:14.80px;background:linear-gradient(#1a48a8,#1e52b7 30%,#2158c0);border-radius:2px 2px 0 0;box-shadow:inset 0.7px 0.7px 1px rgba(0,0,30,.55);"></div>
<div style="left:188.70px;top:422.20px;width:8.60px;height:8.00px;background:#16301a;border:0.9px solid #50544c;border-radius:1px;"><svg width="7.2" height="6.6" viewBox="0 0 8 7" preserveAspectRatio="none" style="left:0;top:0"><path d="M0.8 4.2 C2 1.2 3 1.2 4 3.4 S6 5.6 7 2.6" fill="none" stroke="#35e035" stroke-width="0.9"/></svg></div>
<span class="t" style="left:200.00px;top:422.88px;height:8.04px;line-height:8.04px;font-size:6.70px;color:#fff;font-family:'Liberation Sans',sans-serif;transform:scaleX(0.8730);">Term-LAB</span>
<div style="left:543.70px;top:417.50px;width:53.30px;height:16.50px;background:linear-gradient(#2a86dc 0,#35a4f0 10%,#1a92ea 22%,#138ee8 80%,#128ae4 100%);border-left:0.8px solid #0c5cb8;"></div>
<div style="left:550.60px;top:421.90px;width:7.60px;height:8.20px;background:#c8d0d8;border:0.9px solid #30343c;"><div style="left:0.6px;top:0.6px;width:4.6px;height:4px;background:#2c8cd0"></div></div>
<div style="left:561.20px;top:422.60px;width:7.60px;height:7.20px;background:#4468b0;border-radius:2px;"><div style="left:3.6px;top:2.6px;width:4px;height:4px;background:#e03434;border-radius:50%"></div><div style="left:0.6px;top:0.4px;width:3px;height:3.4px;background:#dfe6ee"></div></div>
<span class="t" style="left:573.60px;top:422.56px;height:8.28px;line-height:8.28px;font-size:6.90px;color:#e6f2ff;font-family:'Liberation Sans',sans-serif;transform:scaleX(0.9093);">12:48</span>
<div style="left:1.80px;top:433.80px;width:595.20px;height:8.00px;background:#2262e2;"></div>
<div style="left:1.80px;top:433.80px;width:80.00px;height:8.00px;background:#2f8632;"></div>
<div style="left:182.50px;top:433.80px;width:92.00px;height:8.00px;background:#2158c0;"></div>
<div style="left:543.70px;top:433.80px;width:53.30px;height:8.00px;background:#128ae4;"></div>
</div></body></html>
